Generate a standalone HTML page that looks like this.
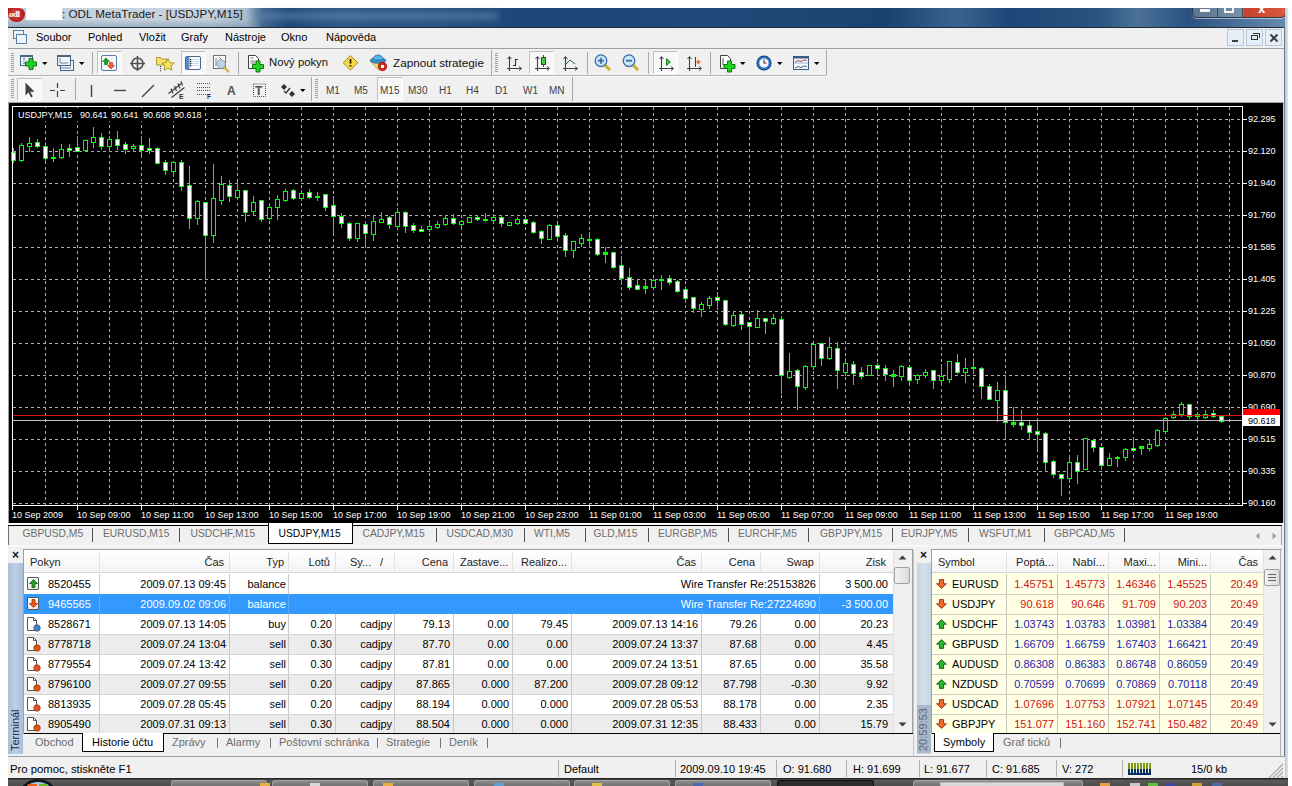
<!DOCTYPE html><html><head><meta charset="utf-8"><style>
*{margin:0;padding:0;box-sizing:border-box}
body{width:1292px;height:786px;overflow:hidden;background:#fff;font-family:"Liberation Sans", sans-serif;font-size:11px;color:#000;position:relative}
.a{position:absolute}
.t{position:absolute;white-space:nowrap;line-height:1}
</style></head><body>

<div class="a" style="left:8px;top:8px;width:1280px;height:20px;background:linear-gradient(90deg,#bccadb 0px,#c9d4df 100px,#c4d0dc 200px,#a9bccf 238px,#3d6590 255px,#1f4777 280px,#2f5886 330px,#2a5282 420px,#1d4575 520px,#204a7a 700px,#1c426f 880px,#3a6490 950px,#1f4676 1000px,#2a5380 1090px,#4c7299 1130px,#2a5280 1180px,#6a8cae 1280px)"></div>
<div class="a" style="left:8px;top:19px;width:250px;height:8px;background:linear-gradient(180deg,rgba(150,170,190,0) 0,rgba(120,145,170,0.55) 100%)"></div>
<div class="a" style="left:8px;top:27px;width:1277px;height:1px;background:#1e2b38"></div>
<div class="a" style="left:258px;top:12px;width:240px;height:8px;background:rgba(110,140,175,0.55);filter:blur(3px)"></div>
<div class="a" style="left:8px;top:8px;width:17px;height:14px;background:radial-gradient(circle at 45% 40%,#e84a4a,#b01c1c 70%,#8a1010);border-radius:0 6px 8px 8px"></div>
<div class="t" style="left:9px;top:10px;font-size:9px;color:#fff;font-family:'Liberation Serif',serif;font-weight:bold;letter-spacing:-0.5px">odl</div>
<div class="a" style="left:26px;top:8px;width:36px;height:12px;background:#fff"></div>
<div class="t" style="left:62px;top:8px;font-size:11.7px;color:#1b1b1b">: ODL MetaTrader - [USDJPY,M15]</div>
<div class="a" style="left:1192px;top:8px;width:94px;height:10px;border:1px solid #2a3a4e;border-top:none;border-radius:0 0 5px 5px;background:linear-gradient(90deg,#5a7590 0,#7890a8 50px,#c8402c 51px,#d85a40 93px);box-shadow:0 1px 0 rgba(255,255,255,0.5)"></div>
<div class="a" style="left:1217px;top:8px;width:1px;height:10px;background:#3a4a5a"></div>
<div class="a" style="left:1242px;top:8px;width:1px;height:10px;background:#3a4a5a"></div>
<div class="a" style="left:1200px;top:9px;width:10px;height:3px;background:#f4f4f4"></div>
<div class="a" style="left:1224px;top:8px;width:10px;height:5px;border:2px solid #f4f4f4;border-top:none"></div>
<div class="t" style="left:1258px;top:2px;font-size:13px;color:#fff;font-weight:bold">x</div>
<div class="a" style="left:1284px;top:27px;width:1px;height:752px;background:#6a7a8a"></div>
<div class="a" style="left:1285px;top:8px;width:3px;height:771px;background:linear-gradient(90deg,#b4c8dc,#dce6f0)"></div>
<div class="a" style="left:8px;top:28px;width:1276px;height:20px;background:#f0f0f0"></div>
<div class="a" style="left:8px;top:48px;width:1276px;height:1px;background:#a0a0a0"></div>
<div class="t" style="left:36px;top:32px;font-size:11px">Soubor</div>
<div class="t" style="left:88px;top:32px;font-size:11px">Pohled</div>
<div class="t" style="left:139px;top:32px;font-size:11px">Vložit</div>
<div class="t" style="left:181px;top:32px;font-size:11px">Grafy</div>
<div class="t" style="left:225px;top:32px;font-size:11px">Nástroje</div>
<div class="t" style="left:281px;top:32px;font-size:11px">Okno</div>
<div class="t" style="left:326px;top:32px;font-size:11px">Nápověda</div>
<div class="a" style="left:13px;top:30px;width:11px;height:9px;border:1px solid #5a7fa8;background:#eaf2fa"></div>
<div class="a" style="left:16px;top:34px;width:11px;height:10px;border:1px solid #5a7fa8;background:#eaf2fa"></div>
<div class="a" style="left:1227px;top:29px;width:17px;height:17px;border:1px solid #b8c8dc;background:#e6eef8"></div>
<div class="a" style="left:1246px;top:29px;width:17px;height:17px;border:1px solid #b8c8dc;background:#e6eef8"></div>
<div class="a" style="left:1265px;top:29px;width:17px;height:17px;border:1px solid #b8c8dc;background:#e6eef8"></div>
<div class="a" style="left:1232px;top:40px;width:6px;height:2px;background:#3a4248"></div>
<div class="a" style="left:1251px;top:35px;width:7px;height:5px;border:1px solid #333"></div>
<div class="a" style="left:1253px;top:33px;width:7px;height:5px;border:1px solid #333;border-left:none;border-bottom:none"></div>
<svg class="a" style="left:1269px;top:33px" width="10" height="10" viewBox="0 0 10 10"><path d="M1.5 1.5l7 7M8.5 1.5l-7 7" stroke="#3a4248" stroke-width="2"/></svg>
<div class="a" style="left:8px;top:49px;width:1276px;height:53px;background:#f0f0f0"></div>
<div class="a" style="left:8px;top:75px;width:818px;height:1px;background:#b4b4b4"></div>
<div class="a" style="left:8px;top:76px;width:818px;height:1px;background:#fafafa"></div>
<div class="a" style="left:11px;top:53px;width:3px;height:1px;background:#a0a0a0"></div>
<div class="a" style="left:11px;top:55px;width:3px;height:1px;background:#a0a0a0"></div>
<div class="a" style="left:11px;top:57px;width:3px;height:1px;background:#a0a0a0"></div>
<div class="a" style="left:11px;top:59px;width:3px;height:1px;background:#a0a0a0"></div>
<div class="a" style="left:11px;top:61px;width:3px;height:1px;background:#a0a0a0"></div>
<div class="a" style="left:11px;top:63px;width:3px;height:1px;background:#a0a0a0"></div>
<div class="a" style="left:11px;top:65px;width:3px;height:1px;background:#a0a0a0"></div>
<div class="a" style="left:11px;top:67px;width:3px;height:1px;background:#a0a0a0"></div>
<div class="a" style="left:11px;top:69px;width:3px;height:1px;background:#a0a0a0"></div>
<div class="a" style="left:11px;top:71px;width:3px;height:1px;background:#a0a0a0"></div>
<div class="a" style="left:491px;top:50px;width:1px;height:25px;background:#a8a8a8"></div>
<div class="a" style="left:495px;top:53px;width:3px;height:1px;background:#a0a0a0"></div>
<div class="a" style="left:495px;top:55px;width:3px;height:1px;background:#a0a0a0"></div>
<div class="a" style="left:495px;top:57px;width:3px;height:1px;background:#a0a0a0"></div>
<div class="a" style="left:495px;top:59px;width:3px;height:1px;background:#a0a0a0"></div>
<div class="a" style="left:495px;top:61px;width:3px;height:1px;background:#a0a0a0"></div>
<div class="a" style="left:495px;top:63px;width:3px;height:1px;background:#a0a0a0"></div>
<div class="a" style="left:495px;top:65px;width:3px;height:1px;background:#a0a0a0"></div>
<div class="a" style="left:495px;top:67px;width:3px;height:1px;background:#a0a0a0"></div>
<div class="a" style="left:495px;top:69px;width:3px;height:1px;background:#a0a0a0"></div>
<div class="a" style="left:495px;top:71px;width:3px;height:1px;background:#a0a0a0"></div>
<div class="a" style="left:826px;top:50px;width:1px;height:25px;background:#a8a8a8"></div>
<div class="a" style="left:92px;top:52px;width:1px;height:22px;background:#a8a8a8"></div>
<div class="a" style="left:238px;top:52px;width:1px;height:22px;background:#a8a8a8"></div>
<div class="a" style="left:97px;top:51px;width:25px;height:23px;border:1px solid #c0c0c0;border-right-color:#fff;border-bottom-color:#fff;background:#f8f8f8"></div>
<div class="a" style="left:181px;top:51px;width:25px;height:23px;border:1px solid #c0c0c0;border-right-color:#fff;border-bottom-color:#fff;background:#f8f8f8"></div>
<div class="a" style="left:587px;top:52px;width:1px;height:22px;background:#a8a8a8"></div>
<div class="a" style="left:648px;top:52px;width:1px;height:22px;background:#a8a8a8"></div>
<div class="a" style="left:710px;top:52px;width:1px;height:22px;background:#a8a8a8"></div>
<div class="a" style="left:529px;top:51px;width:25px;height:23px;border:1px solid #c0c0c0;border-right-color:#fff;border-bottom-color:#fff;background:#f8f8f8"></div>
<div class="a" style="left:653px;top:51px;width:25px;height:23px;border:1px solid #c0c0c0;border-right-color:#fff;border-bottom-color:#fff;background:#f8f8f8"></div>
<div class="t" style="left:269px;top:57px;font-size:11.3px;color:#111">Nový pokyn</div>
<div class="t" style="left:393px;top:57px;font-size:11.7px;color:#111">Zapnout strategie</div>
<div class="a" style="left:11px;top:79px;width:3px;height:1px;background:#a0a0a0"></div>
<div class="a" style="left:11px;top:81px;width:3px;height:1px;background:#a0a0a0"></div>
<div class="a" style="left:11px;top:83px;width:3px;height:1px;background:#a0a0a0"></div>
<div class="a" style="left:11px;top:85px;width:3px;height:1px;background:#a0a0a0"></div>
<div class="a" style="left:11px;top:87px;width:3px;height:1px;background:#a0a0a0"></div>
<div class="a" style="left:11px;top:89px;width:3px;height:1px;background:#a0a0a0"></div>
<div class="a" style="left:11px;top:91px;width:3px;height:1px;background:#a0a0a0"></div>
<div class="a" style="left:11px;top:93px;width:3px;height:1px;background:#a0a0a0"></div>
<div class="a" style="left:11px;top:95px;width:3px;height:1px;background:#a0a0a0"></div>
<div class="a" style="left:11px;top:97px;width:3px;height:1px;background:#a0a0a0"></div>
<div class="a" style="left:75px;top:78px;width:1px;height:22px;background:#a8a8a8"></div>
<div class="a" style="left:17px;top:78px;width:25px;height:23px;border:1px solid #c0c0c0;border-right-color:#fff;border-bottom-color:#fff;background:#f8f8f8"></div>
<div class="a" style="left:311px;top:77px;width:1px;height:24px;background:#a8a8a8"></div>
<div class="a" style="left:315px;top:79px;width:3px;height:1px;background:#a0a0a0"></div>
<div class="a" style="left:315px;top:81px;width:3px;height:1px;background:#a0a0a0"></div>
<div class="a" style="left:315px;top:83px;width:3px;height:1px;background:#a0a0a0"></div>
<div class="a" style="left:315px;top:85px;width:3px;height:1px;background:#a0a0a0"></div>
<div class="a" style="left:315px;top:87px;width:3px;height:1px;background:#a0a0a0"></div>
<div class="a" style="left:315px;top:89px;width:3px;height:1px;background:#a0a0a0"></div>
<div class="a" style="left:315px;top:91px;width:3px;height:1px;background:#a0a0a0"></div>
<div class="a" style="left:315px;top:93px;width:3px;height:1px;background:#a0a0a0"></div>
<div class="a" style="left:315px;top:95px;width:3px;height:1px;background:#a0a0a0"></div>
<div class="a" style="left:315px;top:97px;width:3px;height:1px;background:#a0a0a0"></div>
<div class="a" style="left:572px;top:77px;width:1px;height:24px;background:#a8a8a8"></div>
<div class="a" style="left:377px;top:77px;width:26px;height:24px;border:1px solid #c0c0c0;border-right-color:#fff;border-bottom-color:#fff;background:#f8f8f8"></div>
<div class="t" style="left:326px;top:86px;font-size:10px;color:#404040">M1</div>
<div class="t" style="left:354px;top:86px;font-size:10px;color:#404040">M5</div>
<div class="t" style="left:380px;top:86px;font-size:10px;color:#404040">M15</div>
<div class="t" style="left:408px;top:86px;font-size:10px;color:#404040">M30</div>
<div class="t" style="left:439px;top:86px;font-size:10px;color:#404040">H1</div>
<div class="t" style="left:466px;top:86px;font-size:10px;color:#404040">H4</div>
<div class="t" style="left:495px;top:86px;font-size:10px;color:#404040">D1</div>
<div class="t" style="left:523px;top:86px;font-size:10px;color:#404040">W1</div>
<div class="t" style="left:549px;top:86px;font-size:10px;color:#404040">MN</div>
<svg class="a" style="left:0px;top:0px" width="1292" height="105" viewBox="0 0 1292 105">
<rect x="20.5" y="55.5" width="12" height="10" fill="#eaf4fc" stroke="#4a6584"/>
<rect x="20.5" y="55.5" width="12" height="1.5" fill="#4a6584"/>
<path d="M24 58v6M23 59l1-1 1 1M23 63l1 1 1-1" stroke="#7a8aa0" fill="none" stroke-width="0.8"/>
<path d="M29 58.5 h4 v3.5 h3.5 v4 h-3.5 v3.5 h-4 v-3.5 h-3.5 v-4 h3.5 z" fill="#22d422" stroke="#0a6a0a" stroke-width="0.9"/>
<path d="M42 62 h5.5 l-2.75 3 z" fill="#000"/>
<rect x="60.5" y="60.5" width="13" height="10" fill="#eaf4fc" stroke="#4a6584"/>
<rect x="57.5" y="55.5" width="13" height="10" fill="#eaf4fc" stroke="#4a6584"/>
<rect x="57.5" y="55.5" width="13" height="1.5" fill="#4a6584"/>
<path d="M60 58v5h8M61 68h10" stroke="#6a7a90" fill="none" stroke-width="0.9"/>
<path d="M79 62 h5.5 l-2.75 3 z" fill="#000"/>
<rect x="101.5" y="55.5" width="15" height="15" rx="1.5" fill="#f2f8fe" stroke="#5a7aa8"/>
<path d="M106 58 l3.5 3.5 h-2 v3 h-3 v-3 h-2 z" fill="#1ea01e" stroke="#0a700a" stroke-width="0.6"/>
<path d="M111 69 l3.5 -3.5 h-2 v-3 h-3 v3 h-2 z" fill="#f06030" stroke="#b03010" stroke-width="0.6"/>
<circle cx="137.5" cy="63.5" r="5.5" fill="none" stroke="#505050" stroke-width="1.6"/>
<path d="M137.5 56v15M130 63.5h15" stroke="#505050" stroke-width="1.6"/>
<path d="M156.5 57.5h4l1 1.5h5v6h-10z" fill="#f8e070" stroke="#b09838"/>
<path d="M168 58.5l1.9 4 4.3 .5-3.2 2.9.9 4.3-3.9-2.2-3.9 2.2.9-4.3-3.2-2.9 4.3-.5z" fill="#f6e25a" stroke="#a89030" stroke-width="0.9"/>
<path d="M160.5 66v6" stroke="#333" stroke-dasharray="1,1.2"/>
<rect x="185.5" y="56.5" width="15" height="13" rx="1.5" fill="#fafcff" stroke="#4a6a8a"/>
<rect x="186" y="57" width="3.5" height="12" fill="#5a8ac8"/>
<rect x="190" y="59" width="1.3" height="1.3" fill="#222"/><rect x="192" y="59.3" width="7" height="0.7" fill="#b8c8e0"/>
<rect x="190" y="61" width="1.3" height="1.3" fill="#222"/><rect x="192" y="61.3" width="7" height="0.7" fill="#b8c8e0"/>
<rect x="190" y="63" width="1.3" height="1.3" fill="#222"/><rect x="192" y="63.3" width="7" height="0.7" fill="#b8c8e0"/>
<rect x="190" y="65" width="1.3" height="1.3" fill="#222"/><rect x="192" y="65.3" width="7" height="0.7" fill="#b8c8e0"/>
<rect x="213.5" y="55.5" width="12" height="13" fill="#fff" stroke="#707070"/>
<path d="M216 58v8M219 57l3 3" stroke="#606870" stroke-width="0.9" fill="none"/>
<circle cx="221" cy="64" r="4.3" fill="#b8d4e8" stroke="#8aa8c0" stroke-width="0.9"/>
<path d="M224 67l5 5" stroke="#c8b040" stroke-width="2.2"/>
<path d="M248.5 55.5h7l3 3v10h-10z" fill="#fff" stroke="#404040"/>
<path d="M250.5 58h3M250.5 61h5M250.5 63h5" stroke="#777" stroke-width="1"/>
<path d="M256 61.0 h4 v3.5 h3.5 v4 h-3.5 v3.5 h-4 v-3.5 h-3.5 v-4 h3.5 z" fill="#22d422" stroke="#0a6a0a" stroke-width="0.9"/>
<path d="M350.5 55.5l7.3 7.3-7.3 7.3-7.3-7.3z" fill="#f8d848" stroke="#a88a20" stroke-linejoin="round"/>
<path d="M350.5 59v4.5M350.5 65v1.5" stroke="#302000" stroke-width="1.8"/>
<path d="M370.5 61.5h14l-6 8.5z" fill="#f6e070" stroke="#b89838" stroke-width="0.8"/>
<ellipse cx="378" cy="60.5" rx="7.8" ry="2.8" fill="#3a8ccc" stroke="#2a68a0" stroke-width="0.8"/>
<path d="M372.5 60 q1-5 5.5-5 q4.5 0 5.5 5z" fill="#5ab4e8" stroke="#2a68a0" stroke-width="0.8"/>
<circle cx="382.5" cy="66.5" r="4.2" fill="#d42a1a" stroke="#901010" stroke-width="0.8"/>
<rect x="381" y="65" width="3" height="3" fill="#fff"/>
<path d="M509.5 57v14M507 68.5h14" stroke="#404040" stroke-width="1.1" fill="none"/>
<path d="M507.5 59l2-2.5 2 2.5M519 66.5l2.5 2-2.5 2" stroke="#404040" stroke-width="1" fill="none"/>
<path d="M515.5 59v7M515.5 59.5h2.5M513 65.5h2.5" stroke="#204020" stroke-width="1.1" fill="none"/>
<path d="M537.5 57v14M535 68.5h14" stroke="#404040" stroke-width="1.1" fill="none"/>
<path d="M535.5 59l2-2.5 2 2.5M547 66.5l2.5 2-2.5 2" stroke="#404040" stroke-width="1" fill="none"/>
<path d="M543.5 55v12" stroke="#106010" stroke-width="1"/>
<rect x="541.5" y="57.5" width="4" height="7" fill="#40d040" stroke="#106010"/>
<path d="M565.5 57v14M563 68.5h14" stroke="#404040" stroke-width="1.1" fill="none"/>
<path d="M563.5 59l2-2.5 2 2.5M575 66.5l2.5 2-2.5 2" stroke="#404040" stroke-width="1" fill="none"/>
<path d="M566 64l4-4 5 4" stroke="#306030" stroke-width="1" fill="none"/>
<path d="M605 65l5 5" stroke="#c8b030" stroke-width="3"/>
<circle cx="601" cy="60.7" r="5.8" fill="#cae8f8" stroke="#3a6ab0" stroke-width="1.3"/>
<path d="M598 60.7h6" stroke="#3a6ab0" stroke-width="1.8"/>
<path d="M601 57.7v6" stroke="#3a6ab0" stroke-width="1.8"/>
<path d="M633 65l5 5" stroke="#c8b030" stroke-width="3"/>
<circle cx="629" cy="60.7" r="5.8" fill="#cae8f8" stroke="#3a6ab0" stroke-width="1.3"/>
<path d="M626 60.7h6" stroke="#3a6ab0" stroke-width="1.8"/>
<path d="M661.5 57v14M659 68.5h14" stroke="#404040" stroke-width="1.1" fill="none"/>
<path d="M659.5 59l2-2.5 2 2.5M671 66.5l2.5 2-2.5 2" stroke="#404040" stroke-width="1" fill="none"/>
<path d="M666.5 58.5l4 3.5-4 3.5z" fill="#40c040" stroke="#108010" stroke-width="0.9"/>
<path d="M689.5 57v14M687 68.5h14" stroke="#404040" stroke-width="1.1" fill="none"/>
<path d="M687.5 59l2-2.5 2 2.5M699 66.5l2.5 2-2.5 2" stroke="#404040" stroke-width="1" fill="none"/>
<path d="M695.5 57v10" stroke="#404040" stroke-width="1.1"/>
<path d="M701 62h-4M699 60l-2 2 2 2" stroke="#d06020" stroke-width="1.1" fill="none"/>
<path d="M720.5 55.5h7l3 3v10h-10z" fill="#fff" stroke="#404040"/>
<path d="M723 58v7h3" stroke="#555" fill="none"/>
<path d="M727.5 61.0 h4 v3.5 h3.5 v4 h-3.5 v3.5 h-4 v-3.5 h-3.5 v-4 h3.5 z" fill="#22d422" stroke="#0a6a0a" stroke-width="0.9"/>
<path d="M740 62 h5.5 l-2.75 3 z" fill="#000"/>
<circle cx="764" cy="63" r="7.6" fill="#12468a"/>
<circle cx="764" cy="63" r="6.3" fill="#3a7ac8"/>
<circle cx="764" cy="63" r="4.6" fill="#f4f8fc"/>
<path d="M764 59.5v3.5h2.5" stroke="#6a2010" stroke-width="1.1" fill="none"/>
<path d="M777 62 h5.5 l-2.75 3 z" fill="#000"/>
<rect x="793.5" y="56.5" width="15" height="13" fill="#f4faff" stroke="#3a5a88"/>
<rect x="793.5" y="56.5" width="15" height="2" fill="#3a5a88"/>
<path d="M794 63h14" stroke="#8aa0c0" stroke-width="0.8"/>
<path d="M795 62l3-1.5 3 1 3-1.5 3 0.5" stroke="#b03020" stroke-width="0.9" fill="none"/>
<path d="M795 68l3-1.5 3 1 3-1.5 3 0.5" stroke="#405060" stroke-width="0.9" fill="none"/>
<path d="M814 62 h5.5 l-2.75 3 z" fill="#000"/>
<path d="M25.5 82.5v13l3-3 2.5 5 1.8-1-2.5-4.8h4.2z" fill="#404040"/>
<path d="M57.5 83v5M57.5 91v6M50 90.5h5M60 90.5h5" stroke="#404040" stroke-width="1.2"/>
<path d="M91.5 85v12" stroke="#404040" stroke-width="1.4"/>
<path d="M114 90.5h12" stroke="#404040" stroke-width="1.4"/>
<path d="M142 97l12-12" stroke="#404040" stroke-width="1.3"/>
<path d="M168.5 93.5l13-10M171.5 97.5l13-10" stroke="#404040" stroke-width="1.3" fill="none"/>
<path d="M171 88.5l2 5M174.5 86l2 5M178 83.5l2 5M181 81.5l1.5 4" stroke="#404040" stroke-width="1.2" fill="none"/>
<text x="179" y="98.5" font-size="7" font-weight="bold" fill="#303030" font-family="Liberation Sans, sans-serif">E</text>
<path d="M197 83.5h13" stroke="#505050" stroke-dasharray="1,1" stroke-width="1"/>
<path d="M197 87.5h13" stroke="#505050" stroke-dasharray="1,1" stroke-width="1"/>
<path d="M197 90.5h13" stroke="#505050" stroke-dasharray="1,1" stroke-width="1"/>
<path d="M197 94.5h13" stroke="#505050" stroke-dasharray="1,1" stroke-width="1"/>
<text x="207" y="99" font-size="6.5" font-weight="bold" fill="#303030" font-family="Liberation Sans, sans-serif">F</text>
<text x="227" y="95" font-size="12" font-weight="bold" fill="#505050" font-family="Liberation Sans, sans-serif">A</text>
<rect x="253.5" y="84" width="12" height="12.5" fill="none" stroke="#505050" stroke-dasharray="1,1"/>
<text x="255" y="95" font-size="12" font-weight="bold" fill="#505050" font-family="Liberation Sans, sans-serif">T</text>
<path d="M281 87l3-3 3 3-3 3z" fill="#303030"/><path d="M289 94l3-3 3 3-3 3z" fill="#303030"/>
<path d="M284 91l2 2 4-5" stroke="#303030" stroke-width="1.3" fill="none"/>
<path d="M300 89 h5.5 l-2.75 3 z" fill="#000"/>
</svg>
<div class="a" style="left:8px;top:102px;width:1276px;height:421px;background:#000;border-left:1px solid #a0a0a0;border-top:1px solid #a0a0a0;border-right:1px solid #d0d0d0"></div>
<svg class="a" style="left:10px;top:104px" width="1272" height="419" viewBox="10 104 1272 419" shape-rendering="crispEdges" font-family="Liberation Sans, sans-serif">
<line x1="45.5" y1="107" x2="45.5" y2="505" stroke="#acacac" stroke-dasharray="3,3"/>
<line x1="77.5" y1="107" x2="77.5" y2="505" stroke="#acacac" stroke-dasharray="3,3"/>
<line x1="109.5" y1="107" x2="109.5" y2="505" stroke="#acacac" stroke-dasharray="3,3"/>
<line x1="141.5" y1="107" x2="141.5" y2="505" stroke="#acacac" stroke-dasharray="3,3"/>
<line x1="173.5" y1="107" x2="173.5" y2="505" stroke="#acacac" stroke-dasharray="3,3"/>
<line x1="205.5" y1="107" x2="205.5" y2="505" stroke="#acacac" stroke-dasharray="3,3"/>
<line x1="237.5" y1="107" x2="237.5" y2="505" stroke="#acacac" stroke-dasharray="3,3"/>
<line x1="269.5" y1="107" x2="269.5" y2="505" stroke="#acacac" stroke-dasharray="3,3"/>
<line x1="301.5" y1="107" x2="301.5" y2="505" stroke="#acacac" stroke-dasharray="3,3"/>
<line x1="333.5" y1="107" x2="333.5" y2="505" stroke="#acacac" stroke-dasharray="3,3"/>
<line x1="365.5" y1="107" x2="365.5" y2="505" stroke="#acacac" stroke-dasharray="3,3"/>
<line x1="397.5" y1="107" x2="397.5" y2="505" stroke="#acacac" stroke-dasharray="3,3"/>
<line x1="429.5" y1="107" x2="429.5" y2="505" stroke="#acacac" stroke-dasharray="3,3"/>
<line x1="461.5" y1="107" x2="461.5" y2="505" stroke="#acacac" stroke-dasharray="3,3"/>
<line x1="493.5" y1="107" x2="493.5" y2="505" stroke="#acacac" stroke-dasharray="3,3"/>
<line x1="525.5" y1="107" x2="525.5" y2="505" stroke="#acacac" stroke-dasharray="3,3"/>
<line x1="557.5" y1="107" x2="557.5" y2="505" stroke="#acacac" stroke-dasharray="3,3"/>
<line x1="589.5" y1="107" x2="589.5" y2="505" stroke="#acacac" stroke-dasharray="3,3"/>
<line x1="621.5" y1="107" x2="621.5" y2="505" stroke="#acacac" stroke-dasharray="3,3"/>
<line x1="653.5" y1="107" x2="653.5" y2="505" stroke="#acacac" stroke-dasharray="3,3"/>
<line x1="685.5" y1="107" x2="685.5" y2="505" stroke="#acacac" stroke-dasharray="3,3"/>
<line x1="717.5" y1="107" x2="717.5" y2="505" stroke="#acacac" stroke-dasharray="3,3"/>
<line x1="749.5" y1="107" x2="749.5" y2="505" stroke="#acacac" stroke-dasharray="3,3"/>
<line x1="781.5" y1="107" x2="781.5" y2="505" stroke="#acacac" stroke-dasharray="3,3"/>
<line x1="813.5" y1="107" x2="813.5" y2="505" stroke="#acacac" stroke-dasharray="3,3"/>
<line x1="845.5" y1="107" x2="845.5" y2="505" stroke="#acacac" stroke-dasharray="3,3"/>
<line x1="877.5" y1="107" x2="877.5" y2="505" stroke="#acacac" stroke-dasharray="3,3"/>
<line x1="909.5" y1="107" x2="909.5" y2="505" stroke="#acacac" stroke-dasharray="3,3"/>
<line x1="941.5" y1="107" x2="941.5" y2="505" stroke="#acacac" stroke-dasharray="3,3"/>
<line x1="973.5" y1="107" x2="973.5" y2="505" stroke="#acacac" stroke-dasharray="3,3"/>
<line x1="1005.5" y1="107" x2="1005.5" y2="505" stroke="#acacac" stroke-dasharray="3,3"/>
<line x1="1037.5" y1="107" x2="1037.5" y2="505" stroke="#acacac" stroke-dasharray="3,3"/>
<line x1="1069.5" y1="107" x2="1069.5" y2="505" stroke="#acacac" stroke-dasharray="3,3"/>
<line x1="1101.5" y1="107" x2="1101.5" y2="505" stroke="#acacac" stroke-dasharray="3,3"/>
<line x1="1133.5" y1="107" x2="1133.5" y2="505" stroke="#acacac" stroke-dasharray="3,3"/>
<line x1="1165.5" y1="107" x2="1165.5" y2="505" stroke="#acacac" stroke-dasharray="3,3"/>
<line x1="1197.5" y1="107" x2="1197.5" y2="505" stroke="#acacac" stroke-dasharray="3,3"/>
<line x1="1229.5" y1="107" x2="1229.5" y2="505" stroke="#acacac" stroke-dasharray="3,3"/>
<line x1="13" y1="119.5" x2="1242" y2="119.5" stroke="#acacac" stroke-dasharray="3,3"/>
<line x1="13" y1="151.5" x2="1242" y2="151.5" stroke="#acacac" stroke-dasharray="3,3"/>
<line x1="13" y1="183.5" x2="1242" y2="183.5" stroke="#acacac" stroke-dasharray="3,3"/>
<line x1="13" y1="215.5" x2="1242" y2="215.5" stroke="#acacac" stroke-dasharray="3,3"/>
<line x1="13" y1="247.5" x2="1242" y2="247.5" stroke="#acacac" stroke-dasharray="3,3"/>
<line x1="13" y1="279.5" x2="1242" y2="279.5" stroke="#acacac" stroke-dasharray="3,3"/>
<line x1="13" y1="311.5" x2="1242" y2="311.5" stroke="#acacac" stroke-dasharray="3,3"/>
<line x1="13" y1="343.5" x2="1242" y2="343.5" stroke="#acacac" stroke-dasharray="3,3"/>
<line x1="13" y1="375.5" x2="1242" y2="375.5" stroke="#acacac" stroke-dasharray="3,3"/>
<line x1="13" y1="407.5" x2="1242" y2="407.5" stroke="#acacac" stroke-dasharray="3,3"/>
<line x1="13" y1="439.5" x2="1242" y2="439.5" stroke="#acacac" stroke-dasharray="3,3"/>
<line x1="13" y1="471.5" x2="1242" y2="471.5" stroke="#acacac" stroke-dasharray="3,3"/>
<line x1="13" y1="503.5" x2="1242" y2="503.5" stroke="#acacac" stroke-dasharray="3,3"/>
<rect x="13" y="148" width="1" height="15" fill="#00ff00"/>
<rect x="11" y="152" width="5" height="9" fill="#00ff00"/>
<rect x="12" y="153" width="3" height="7" fill="#ffffff"/>
<rect x="21" y="143" width="1" height="19" fill="#00ff00"/>
<rect x="19" y="145" width="5" height="16" fill="#00ff00"/>
<rect x="20" y="146" width="3" height="14" fill="#000000"/>
<rect x="29" y="137" width="1" height="15" fill="#00ff00"/>
<rect x="27" y="143" width="5" height="4" fill="#00ff00"/>
<rect x="28" y="144" width="3" height="2" fill="#000000"/>
<rect x="37" y="139" width="1" height="9" fill="#00ff00"/>
<rect x="35" y="142" width="5" height="5" fill="#00ff00"/>
<rect x="36" y="143" width="3" height="3" fill="#ffffff"/>
<rect x="45" y="142" width="1" height="22" fill="#00ff00"/>
<rect x="43" y="146" width="5" height="13" fill="#00ff00"/>
<rect x="44" y="147" width="3" height="11" fill="#ffffff"/>
<rect x="53" y="148" width="1" height="14" fill="#00ff00"/>
<rect x="51" y="157" width="5" height="2" fill="#00ff00"/>
<rect x="61" y="144" width="1" height="15" fill="#00ff00"/>
<rect x="59" y="149" width="5" height="9" fill="#00ff00"/>
<rect x="60" y="150" width="3" height="7" fill="#000000"/>
<rect x="69" y="144" width="1" height="13" fill="#00ff00"/>
<rect x="67" y="148" width="5" height="3" fill="#00ff00"/>
<rect x="68" y="149" width="3" height="1" fill="#ffffff"/>
<rect x="77" y="136" width="1" height="16" fill="#00ff00"/>
<rect x="75" y="147" width="5" height="5" fill="#00ff00"/>
<rect x="76" y="148" width="3" height="3" fill="#ffffff"/>
<rect x="85" y="140" width="1" height="12" fill="#00ff00"/>
<rect x="83" y="140" width="5" height="11" fill="#00ff00"/>
<rect x="84" y="141" width="3" height="9" fill="#000000"/>
<rect x="93" y="127" width="1" height="21" fill="#00ff00"/>
<rect x="91" y="137" width="5" height="6" fill="#00ff00"/>
<rect x="92" y="138" width="3" height="4" fill="#000000"/>
<rect x="101" y="133" width="1" height="17" fill="#00ff00"/>
<rect x="99" y="137" width="5" height="10" fill="#00ff00"/>
<rect x="100" y="138" width="3" height="8" fill="#ffffff"/>
<rect x="109" y="136" width="1" height="16" fill="#00ff00"/>
<rect x="107" y="139" width="5" height="8" fill="#00ff00"/>
<rect x="108" y="140" width="3" height="6" fill="#000000"/>
<rect x="117" y="131" width="1" height="19" fill="#00ff00"/>
<rect x="115" y="139" width="5" height="7" fill="#00ff00"/>
<rect x="116" y="140" width="3" height="5" fill="#ffffff"/>
<rect x="125" y="142" width="1" height="12" fill="#00ff00"/>
<rect x="123" y="144" width="5" height="6" fill="#00ff00"/>
<rect x="124" y="145" width="3" height="4" fill="#ffffff"/>
<rect x="133" y="144" width="1" height="7" fill="#00ff00"/>
<rect x="131" y="146" width="5" height="3" fill="#00ff00"/>
<rect x="132" y="147" width="3" height="1" fill="#000000"/>
<rect x="141" y="136" width="1" height="22" fill="#00ff00"/>
<rect x="139" y="145" width="5" height="6" fill="#00ff00"/>
<rect x="140" y="146" width="3" height="4" fill="#ffffff"/>
<rect x="149" y="138" width="1" height="16" fill="#00ff00"/>
<rect x="147" y="148" width="5" height="3" fill="#00ff00"/>
<rect x="148" y="149" width="3" height="1" fill="#ffffff"/>
<rect x="157" y="147" width="1" height="17" fill="#00ff00"/>
<rect x="155" y="148" width="5" height="16" fill="#00ff00"/>
<rect x="156" y="149" width="3" height="14" fill="#ffffff"/>
<rect x="165" y="160" width="1" height="15" fill="#00ff00"/>
<rect x="163" y="162" width="5" height="9" fill="#00ff00"/>
<rect x="164" y="163" width="3" height="7" fill="#ffffff"/>
<rect x="173" y="161" width="1" height="16" fill="#00ff00"/>
<rect x="171" y="162" width="5" height="10" fill="#00ff00"/>
<rect x="172" y="163" width="3" height="8" fill="#000000"/>
<rect x="181" y="160" width="1" height="31" fill="#00ff00"/>
<rect x="179" y="162" width="5" height="25" fill="#00ff00"/>
<rect x="180" y="163" width="3" height="23" fill="#ffffff"/>
<rect x="189" y="166" width="1" height="63" fill="#00ff00"/>
<rect x="187" y="185" width="5" height="34" fill="#00ff00"/>
<rect x="188" y="186" width="3" height="32" fill="#ffffff"/>
<rect x="197" y="200" width="1" height="25" fill="#00ff00"/>
<rect x="195" y="201" width="5" height="18" fill="#00ff00"/>
<rect x="196" y="202" width="3" height="16" fill="#000000"/>
<rect x="205" y="202" width="1" height="77" fill="#00ff00"/>
<rect x="203" y="202" width="5" height="34" fill="#00ff00"/>
<rect x="204" y="203" width="3" height="32" fill="#ffffff"/>
<rect x="213" y="164" width="1" height="79" fill="#00ff00"/>
<rect x="211" y="198" width="5" height="38" fill="#00ff00"/>
<rect x="212" y="199" width="3" height="36" fill="#000000"/>
<rect x="221" y="176" width="1" height="29" fill="#00ff00"/>
<rect x="219" y="184" width="5" height="17" fill="#00ff00"/>
<rect x="220" y="185" width="3" height="15" fill="#000000"/>
<rect x="229" y="180" width="1" height="22" fill="#00ff00"/>
<rect x="227" y="185" width="5" height="12" fill="#00ff00"/>
<rect x="228" y="186" width="3" height="10" fill="#ffffff"/>
<rect x="237" y="182" width="1" height="18" fill="#00ff00"/>
<rect x="235" y="190" width="5" height="8" fill="#00ff00"/>
<rect x="236" y="191" width="3" height="6" fill="#000000"/>
<rect x="245" y="190" width="1" height="32" fill="#00ff00"/>
<rect x="243" y="190" width="5" height="23" fill="#00ff00"/>
<rect x="244" y="191" width="3" height="21" fill="#ffffff"/>
<rect x="253" y="196" width="1" height="20" fill="#00ff00"/>
<rect x="251" y="202" width="5" height="10" fill="#00ff00"/>
<rect x="252" y="203" width="3" height="8" fill="#000000"/>
<rect x="261" y="200" width="1" height="22" fill="#00ff00"/>
<rect x="259" y="200" width="5" height="20" fill="#00ff00"/>
<rect x="260" y="201" width="3" height="18" fill="#ffffff"/>
<rect x="269" y="203" width="1" height="17" fill="#00ff00"/>
<rect x="267" y="207" width="5" height="12" fill="#00ff00"/>
<rect x="268" y="208" width="3" height="10" fill="#000000"/>
<rect x="277" y="195" width="1" height="25" fill="#00ff00"/>
<rect x="275" y="199" width="5" height="9" fill="#00ff00"/>
<rect x="276" y="200" width="3" height="7" fill="#000000"/>
<rect x="285" y="189" width="1" height="13" fill="#00ff00"/>
<rect x="283" y="191" width="5" height="10" fill="#00ff00"/>
<rect x="284" y="192" width="3" height="8" fill="#000000"/>
<rect x="293" y="189" width="1" height="11" fill="#00ff00"/>
<rect x="291" y="190" width="5" height="9" fill="#00ff00"/>
<rect x="292" y="191" width="3" height="7" fill="#ffffff"/>
<rect x="301" y="190" width="1" height="11" fill="#00ff00"/>
<rect x="299" y="193" width="5" height="6" fill="#00ff00"/>
<rect x="300" y="194" width="3" height="4" fill="#000000"/>
<rect x="309" y="189" width="1" height="10" fill="#00ff00"/>
<rect x="307" y="192" width="5" height="6" fill="#00ff00"/>
<rect x="308" y="193" width="3" height="4" fill="#ffffff"/>
<rect x="317" y="192" width="1" height="9" fill="#00ff00"/>
<rect x="315" y="196" width="5" height="2" fill="#00ff00"/>
<rect x="325" y="194" width="1" height="17" fill="#00ff00"/>
<rect x="323" y="194" width="5" height="14" fill="#00ff00"/>
<rect x="324" y="195" width="3" height="12" fill="#ffffff"/>
<rect x="333" y="196" width="1" height="40" fill="#00ff00"/>
<rect x="331" y="205" width="5" height="12" fill="#00ff00"/>
<rect x="332" y="206" width="3" height="10" fill="#ffffff"/>
<rect x="341" y="213" width="1" height="15" fill="#00ff00"/>
<rect x="339" y="216" width="5" height="8" fill="#00ff00"/>
<rect x="340" y="217" width="3" height="6" fill="#ffffff"/>
<rect x="349" y="222" width="1" height="19" fill="#00ff00"/>
<rect x="347" y="223" width="5" height="16" fill="#00ff00"/>
<rect x="348" y="224" width="3" height="14" fill="#ffffff"/>
<rect x="357" y="223" width="1" height="19" fill="#00ff00"/>
<rect x="355" y="223" width="5" height="16" fill="#00ff00"/>
<rect x="356" y="224" width="3" height="14" fill="#000000"/>
<rect x="365" y="221" width="1" height="27" fill="#00ff00"/>
<rect x="363" y="224" width="5" height="10" fill="#00ff00"/>
<rect x="364" y="225" width="3" height="8" fill="#ffffff"/>
<rect x="373" y="216" width="1" height="25" fill="#00ff00"/>
<rect x="371" y="221" width="5" height="14" fill="#00ff00"/>
<rect x="372" y="222" width="3" height="12" fill="#000000"/>
<rect x="381" y="212" width="1" height="11" fill="#00ff00"/>
<rect x="379" y="219" width="5" height="4" fill="#00ff00"/>
<rect x="380" y="220" width="3" height="2" fill="#000000"/>
<rect x="389" y="216" width="1" height="13" fill="#00ff00"/>
<rect x="387" y="217" width="5" height="8" fill="#00ff00"/>
<rect x="388" y="218" width="3" height="6" fill="#ffffff"/>
<rect x="397" y="208" width="1" height="21" fill="#00ff00"/>
<rect x="395" y="212" width="5" height="15" fill="#00ff00"/>
<rect x="396" y="213" width="3" height="13" fill="#000000"/>
<rect x="405" y="211" width="1" height="22" fill="#00ff00"/>
<rect x="403" y="212" width="5" height="15" fill="#00ff00"/>
<rect x="404" y="213" width="3" height="13" fill="#ffffff"/>
<rect x="413" y="223" width="1" height="10" fill="#00ff00"/>
<rect x="411" y="225" width="5" height="6" fill="#00ff00"/>
<rect x="412" y="226" width="3" height="4" fill="#ffffff"/>
<rect x="421" y="226" width="1" height="6" fill="#00ff00"/>
<rect x="419" y="229" width="5" height="3" fill="#00ff00"/>
<rect x="420" y="230" width="3" height="1" fill="#ffffff"/>
<rect x="429" y="220" width="1" height="12" fill="#00ff00"/>
<rect x="427" y="226" width="5" height="4" fill="#00ff00"/>
<rect x="428" y="227" width="3" height="2" fill="#000000"/>
<rect x="437" y="221" width="1" height="8" fill="#00ff00"/>
<rect x="435" y="224" width="5" height="4" fill="#00ff00"/>
<rect x="436" y="225" width="3" height="2" fill="#000000"/>
<rect x="445" y="215" width="1" height="11" fill="#00ff00"/>
<rect x="443" y="218" width="5" height="7" fill="#00ff00"/>
<rect x="444" y="219" width="3" height="5" fill="#000000"/>
<rect x="453" y="214" width="1" height="11" fill="#00ff00"/>
<rect x="451" y="218" width="5" height="6" fill="#00ff00"/>
<rect x="452" y="219" width="3" height="4" fill="#ffffff"/>
<rect x="461" y="220" width="1" height="10" fill="#00ff00"/>
<rect x="459" y="221" width="5" height="4" fill="#00ff00"/>
<rect x="460" y="222" width="3" height="2" fill="#000000"/>
<rect x="469" y="217" width="1" height="6" fill="#00ff00"/>
<rect x="467" y="217" width="5" height="6" fill="#00ff00"/>
<rect x="468" y="218" width="3" height="4" fill="#000000"/>
<rect x="477" y="215" width="1" height="6" fill="#00ff00"/>
<rect x="475" y="217" width="5" height="3" fill="#00ff00"/>
<rect x="476" y="218" width="3" height="1" fill="#ffffff"/>
<rect x="485" y="213" width="1" height="9" fill="#00ff00"/>
<rect x="483" y="219" width="5" height="2" fill="#00ff00"/>
<rect x="493" y="214" width="1" height="9" fill="#00ff00"/>
<rect x="491" y="217" width="5" height="4" fill="#00ff00"/>
<rect x="492" y="218" width="3" height="2" fill="#000000"/>
<rect x="501" y="215" width="1" height="12" fill="#00ff00"/>
<rect x="499" y="217" width="5" height="7" fill="#00ff00"/>
<rect x="500" y="218" width="3" height="5" fill="#ffffff"/>
<rect x="509" y="222" width="1" height="4" fill="#00ff00"/>
<rect x="507" y="222" width="5" height="4" fill="#00ff00"/>
<rect x="508" y="223" width="3" height="2" fill="#000000"/>
<rect x="517" y="217" width="1" height="8" fill="#00ff00"/>
<rect x="515" y="219" width="5" height="5" fill="#00ff00"/>
<rect x="516" y="220" width="3" height="3" fill="#000000"/>
<rect x="525" y="218" width="1" height="7" fill="#00ff00"/>
<rect x="523" y="219" width="5" height="5" fill="#00ff00"/>
<rect x="524" y="220" width="3" height="3" fill="#ffffff"/>
<rect x="533" y="221" width="1" height="13" fill="#00ff00"/>
<rect x="531" y="222" width="5" height="11" fill="#00ff00"/>
<rect x="532" y="223" width="3" height="9" fill="#ffffff"/>
<rect x="541" y="230" width="1" height="14" fill="#00ff00"/>
<rect x="539" y="231" width="5" height="8" fill="#00ff00"/>
<rect x="540" y="232" width="3" height="6" fill="#ffffff"/>
<rect x="549" y="224" width="1" height="16" fill="#00ff00"/>
<rect x="547" y="225" width="5" height="15" fill="#00ff00"/>
<rect x="548" y="226" width="3" height="13" fill="#000000"/>
<rect x="557" y="224" width="1" height="18" fill="#00ff00"/>
<rect x="555" y="225" width="5" height="12" fill="#00ff00"/>
<rect x="556" y="226" width="3" height="10" fill="#ffffff"/>
<rect x="565" y="233" width="1" height="24" fill="#00ff00"/>
<rect x="563" y="235" width="5" height="16" fill="#00ff00"/>
<rect x="564" y="236" width="3" height="14" fill="#ffffff"/>
<rect x="573" y="241" width="1" height="17" fill="#00ff00"/>
<rect x="571" y="241" width="5" height="10" fill="#00ff00"/>
<rect x="572" y="242" width="3" height="8" fill="#000000"/>
<rect x="581" y="234" width="1" height="13" fill="#00ff00"/>
<rect x="579" y="238" width="5" height="6" fill="#00ff00"/>
<rect x="580" y="239" width="3" height="4" fill="#000000"/>
<rect x="589" y="232" width="1" height="15" fill="#00ff00"/>
<rect x="587" y="239" width="5" height="2" fill="#00ff00"/>
<rect x="597" y="238" width="1" height="18" fill="#00ff00"/>
<rect x="595" y="239" width="5" height="16" fill="#00ff00"/>
<rect x="596" y="240" width="3" height="14" fill="#ffffff"/>
<rect x="605" y="247" width="1" height="16" fill="#00ff00"/>
<rect x="603" y="252" width="5" height="3" fill="#00ff00"/>
<rect x="613" y="252" width="1" height="17" fill="#00ff00"/>
<rect x="611" y="252" width="5" height="16" fill="#00ff00"/>
<rect x="612" y="253" width="3" height="14" fill="#ffffff"/>
<rect x="621" y="256" width="1" height="29" fill="#00ff00"/>
<rect x="619" y="265" width="5" height="14" fill="#00ff00"/>
<rect x="620" y="266" width="3" height="12" fill="#ffffff"/>
<rect x="629" y="268" width="1" height="22" fill="#00ff00"/>
<rect x="627" y="277" width="5" height="11" fill="#00ff00"/>
<rect x="628" y="278" width="3" height="9" fill="#ffffff"/>
<rect x="637" y="280" width="1" height="10" fill="#00ff00"/>
<rect x="635" y="285" width="5" height="5" fill="#00ff00"/>
<rect x="636" y="286" width="3" height="3" fill="#ffffff"/>
<rect x="645" y="279" width="1" height="15" fill="#00ff00"/>
<rect x="643" y="286" width="5" height="3" fill="#00ff00"/>
<rect x="653" y="279" width="1" height="11" fill="#00ff00"/>
<rect x="651" y="280" width="5" height="8" fill="#00ff00"/>
<rect x="652" y="281" width="3" height="6" fill="#000000"/>
<rect x="661" y="275" width="1" height="15" fill="#00ff00"/>
<rect x="659" y="279" width="5" height="2" fill="#00ff00"/>
<rect x="669" y="275" width="1" height="10" fill="#00ff00"/>
<rect x="667" y="278" width="5" height="5" fill="#00ff00"/>
<rect x="668" y="279" width="3" height="3" fill="#ffffff"/>
<rect x="677" y="280" width="1" height="13" fill="#00ff00"/>
<rect x="675" y="281" width="5" height="11" fill="#00ff00"/>
<rect x="676" y="282" width="3" height="9" fill="#ffffff"/>
<rect x="685" y="286" width="1" height="17" fill="#00ff00"/>
<rect x="683" y="289" width="5" height="10" fill="#00ff00"/>
<rect x="684" y="290" width="3" height="8" fill="#ffffff"/>
<rect x="693" y="297" width="1" height="16" fill="#00ff00"/>
<rect x="691" y="297" width="5" height="12" fill="#00ff00"/>
<rect x="692" y="298" width="3" height="10" fill="#ffffff"/>
<rect x="701" y="302" width="1" height="15" fill="#00ff00"/>
<rect x="699" y="304" width="5" height="6" fill="#00ff00"/>
<rect x="700" y="305" width="3" height="4" fill="#000000"/>
<rect x="709" y="296" width="1" height="13" fill="#00ff00"/>
<rect x="707" y="298" width="5" height="8" fill="#00ff00"/>
<rect x="708" y="299" width="3" height="6" fill="#000000"/>
<rect x="717" y="292" width="1" height="18" fill="#00ff00"/>
<rect x="715" y="297" width="5" height="4" fill="#00ff00"/>
<rect x="716" y="298" width="3" height="2" fill="#ffffff"/>
<rect x="725" y="300" width="1" height="26" fill="#00ff00"/>
<rect x="723" y="300" width="5" height="25" fill="#00ff00"/>
<rect x="724" y="301" width="3" height="23" fill="#ffffff"/>
<rect x="733" y="312" width="1" height="15" fill="#00ff00"/>
<rect x="731" y="315" width="5" height="11" fill="#00ff00"/>
<rect x="732" y="316" width="3" height="9" fill="#000000"/>
<rect x="741" y="312" width="1" height="18" fill="#00ff00"/>
<rect x="739" y="314" width="5" height="11" fill="#00ff00"/>
<rect x="740" y="315" width="3" height="9" fill="#ffffff"/>
<rect x="749" y="322" width="1" height="34" fill="#00ff00"/>
<rect x="747" y="322" width="5" height="5" fill="#00ff00"/>
<rect x="748" y="323" width="3" height="3" fill="#ffffff"/>
<rect x="757" y="310" width="1" height="18" fill="#00ff00"/>
<rect x="755" y="318" width="5" height="10" fill="#00ff00"/>
<rect x="756" y="319" width="3" height="8" fill="#000000"/>
<rect x="765" y="318" width="1" height="16" fill="#00ff00"/>
<rect x="763" y="318" width="5" height="4" fill="#00ff00"/>
<rect x="764" y="319" width="3" height="2" fill="#ffffff"/>
<rect x="773" y="314" width="1" height="11" fill="#00ff00"/>
<rect x="771" y="318" width="5" height="6" fill="#00ff00"/>
<rect x="772" y="319" width="3" height="4" fill="#000000"/>
<rect x="781" y="316" width="1" height="78" fill="#00ff00"/>
<rect x="779" y="319" width="5" height="57" fill="#00ff00"/>
<rect x="780" y="320" width="3" height="55" fill="#ffffff"/>
<rect x="789" y="353" width="1" height="26" fill="#00ff00"/>
<rect x="787" y="371" width="5" height="7" fill="#00ff00"/>
<rect x="788" y="372" width="3" height="5" fill="#000000"/>
<rect x="797" y="369" width="1" height="41" fill="#00ff00"/>
<rect x="795" y="370" width="5" height="17" fill="#00ff00"/>
<rect x="796" y="371" width="3" height="15" fill="#ffffff"/>
<rect x="805" y="365" width="1" height="25" fill="#00ff00"/>
<rect x="803" y="366" width="5" height="22" fill="#00ff00"/>
<rect x="804" y="367" width="3" height="20" fill="#000000"/>
<rect x="813" y="343" width="1" height="27" fill="#00ff00"/>
<rect x="811" y="344" width="5" height="23" fill="#00ff00"/>
<rect x="812" y="345" width="3" height="21" fill="#000000"/>
<rect x="821" y="343" width="1" height="23" fill="#00ff00"/>
<rect x="819" y="343" width="5" height="16" fill="#00ff00"/>
<rect x="820" y="344" width="3" height="14" fill="#ffffff"/>
<rect x="829" y="337" width="1" height="23" fill="#00ff00"/>
<rect x="827" y="347" width="5" height="12" fill="#00ff00"/>
<rect x="828" y="348" width="3" height="10" fill="#000000"/>
<rect x="837" y="342" width="1" height="47" fill="#00ff00"/>
<rect x="835" y="348" width="5" height="23" fill="#00ff00"/>
<rect x="836" y="349" width="3" height="21" fill="#ffffff"/>
<rect x="845" y="358" width="1" height="18" fill="#00ff00"/>
<rect x="843" y="363" width="5" height="10" fill="#00ff00"/>
<rect x="844" y="364" width="3" height="8" fill="#000000"/>
<rect x="853" y="361" width="1" height="24" fill="#00ff00"/>
<rect x="851" y="364" width="5" height="10" fill="#00ff00"/>
<rect x="852" y="365" width="3" height="8" fill="#ffffff"/>
<rect x="861" y="367" width="1" height="12" fill="#00ff00"/>
<rect x="859" y="372" width="5" height="5" fill="#00ff00"/>
<rect x="860" y="373" width="3" height="3" fill="#ffffff"/>
<rect x="869" y="365" width="1" height="11" fill="#00ff00"/>
<rect x="867" y="365" width="5" height="11" fill="#00ff00"/>
<rect x="868" y="366" width="3" height="9" fill="#000000"/>
<rect x="877" y="363" width="1" height="13" fill="#00ff00"/>
<rect x="875" y="365" width="5" height="4" fill="#00ff00"/>
<rect x="876" y="366" width="3" height="2" fill="#ffffff"/>
<rect x="885" y="365" width="1" height="16" fill="#00ff00"/>
<rect x="883" y="368" width="5" height="7" fill="#00ff00"/>
<rect x="884" y="369" width="3" height="5" fill="#ffffff"/>
<rect x="893" y="370" width="1" height="17" fill="#00ff00"/>
<rect x="891" y="374" width="5" height="3" fill="#00ff00"/>
<rect x="901" y="365" width="1" height="16" fill="#00ff00"/>
<rect x="899" y="366" width="5" height="11" fill="#00ff00"/>
<rect x="900" y="367" width="3" height="9" fill="#000000"/>
<rect x="909" y="366" width="1" height="19" fill="#00ff00"/>
<rect x="907" y="367" width="5" height="14" fill="#00ff00"/>
<rect x="908" y="368" width="3" height="12" fill="#ffffff"/>
<rect x="917" y="374" width="1" height="10" fill="#00ff00"/>
<rect x="915" y="375" width="5" height="5" fill="#00ff00"/>
<rect x="916" y="376" width="3" height="3" fill="#000000"/>
<rect x="925" y="369" width="1" height="9" fill="#00ff00"/>
<rect x="923" y="372" width="5" height="4" fill="#00ff00"/>
<rect x="924" y="373" width="3" height="2" fill="#000000"/>
<rect x="933" y="370" width="1" height="19" fill="#00ff00"/>
<rect x="931" y="370" width="5" height="11" fill="#00ff00"/>
<rect x="932" y="371" width="3" height="9" fill="#ffffff"/>
<rect x="941" y="364" width="1" height="22" fill="#00ff00"/>
<rect x="939" y="376" width="5" height="5" fill="#00ff00"/>
<rect x="940" y="377" width="3" height="3" fill="#000000"/>
<rect x="949" y="361" width="1" height="22" fill="#00ff00"/>
<rect x="947" y="361" width="5" height="19" fill="#00ff00"/>
<rect x="948" y="362" width="3" height="17" fill="#000000"/>
<rect x="957" y="354" width="1" height="20" fill="#00ff00"/>
<rect x="955" y="362" width="5" height="11" fill="#00ff00"/>
<rect x="956" y="363" width="3" height="9" fill="#ffffff"/>
<rect x="965" y="358" width="1" height="25" fill="#00ff00"/>
<rect x="963" y="368" width="5" height="5" fill="#00ff00"/>
<rect x="964" y="369" width="3" height="3" fill="#000000"/>
<rect x="973" y="358" width="1" height="16" fill="#00ff00"/>
<rect x="971" y="367" width="5" height="2" fill="#00ff00"/>
<rect x="981" y="367" width="1" height="32" fill="#00ff00"/>
<rect x="979" y="368" width="5" height="19" fill="#00ff00"/>
<rect x="980" y="369" width="3" height="17" fill="#ffffff"/>
<rect x="989" y="384" width="1" height="16" fill="#00ff00"/>
<rect x="987" y="386" width="5" height="14" fill="#00ff00"/>
<rect x="988" y="387" width="3" height="12" fill="#ffffff"/>
<rect x="997" y="382" width="1" height="40" fill="#00ff00"/>
<rect x="995" y="390" width="5" height="11" fill="#00ff00"/>
<rect x="996" y="391" width="3" height="9" fill="#000000"/>
<rect x="1005" y="375" width="1" height="64" fill="#00ff00"/>
<rect x="1003" y="390" width="5" height="33" fill="#00ff00"/>
<rect x="1004" y="391" width="3" height="31" fill="#ffffff"/>
<rect x="1013" y="407" width="1" height="20" fill="#00ff00"/>
<rect x="1011" y="422" width="5" height="3" fill="#00ff00"/>
<rect x="1021" y="410" width="1" height="20" fill="#00ff00"/>
<rect x="1019" y="422" width="5" height="4" fill="#00ff00"/>
<rect x="1020" y="423" width="3" height="2" fill="#ffffff"/>
<rect x="1029" y="420" width="1" height="19" fill="#00ff00"/>
<rect x="1027" y="425" width="5" height="8" fill="#00ff00"/>
<rect x="1028" y="426" width="3" height="6" fill="#ffffff"/>
<rect x="1037" y="418" width="1" height="33" fill="#00ff00"/>
<rect x="1035" y="431" width="5" height="4" fill="#00ff00"/>
<rect x="1036" y="432" width="3" height="2" fill="#ffffff"/>
<rect x="1045" y="432" width="1" height="40" fill="#00ff00"/>
<rect x="1043" y="433" width="5" height="30" fill="#00ff00"/>
<rect x="1044" y="434" width="3" height="28" fill="#ffffff"/>
<rect x="1053" y="460" width="1" height="18" fill="#00ff00"/>
<rect x="1051" y="461" width="5" height="14" fill="#00ff00"/>
<rect x="1052" y="462" width="3" height="12" fill="#ffffff"/>
<rect x="1061" y="474" width="1" height="22" fill="#00ff00"/>
<rect x="1059" y="474" width="5" height="5" fill="#00ff00"/>
<rect x="1060" y="475" width="3" height="3" fill="#ffffff"/>
<rect x="1069" y="455" width="1" height="28" fill="#00ff00"/>
<rect x="1067" y="462" width="5" height="17" fill="#00ff00"/>
<rect x="1068" y="463" width="3" height="15" fill="#000000"/>
<rect x="1077" y="455" width="1" height="29" fill="#00ff00"/>
<rect x="1075" y="462" width="5" height="10" fill="#00ff00"/>
<rect x="1076" y="463" width="3" height="8" fill="#ffffff"/>
<rect x="1085" y="438" width="1" height="32" fill="#00ff00"/>
<rect x="1083" y="438" width="5" height="32" fill="#00ff00"/>
<rect x="1084" y="439" width="3" height="30" fill="#000000"/>
<rect x="1093" y="440" width="1" height="12" fill="#00ff00"/>
<rect x="1091" y="440" width="5" height="8" fill="#00ff00"/>
<rect x="1092" y="441" width="3" height="6" fill="#ffffff"/>
<rect x="1101" y="447" width="1" height="22" fill="#00ff00"/>
<rect x="1099" y="447" width="5" height="19" fill="#00ff00"/>
<rect x="1100" y="448" width="3" height="17" fill="#ffffff"/>
<rect x="1109" y="453" width="1" height="13" fill="#00ff00"/>
<rect x="1107" y="458" width="5" height="8" fill="#00ff00"/>
<rect x="1108" y="459" width="3" height="6" fill="#000000"/>
<rect x="1117" y="456" width="1" height="11" fill="#00ff00"/>
<rect x="1115" y="457" width="5" height="2" fill="#00ff00"/>
<rect x="1125" y="448" width="1" height="13" fill="#00ff00"/>
<rect x="1123" y="449" width="5" height="9" fill="#00ff00"/>
<rect x="1124" y="450" width="3" height="7" fill="#000000"/>
<rect x="1133" y="437" width="1" height="14" fill="#00ff00"/>
<rect x="1131" y="448" width="5" height="3" fill="#00ff00"/>
<rect x="1132" y="449" width="3" height="1" fill="#ffffff"/>
<rect x="1141" y="446" width="1" height="9" fill="#00ff00"/>
<rect x="1139" y="446" width="5" height="3" fill="#00ff00"/>
<rect x="1149" y="439" width="1" height="12" fill="#00ff00"/>
<rect x="1147" y="444" width="5" height="5" fill="#00ff00"/>
<rect x="1148" y="445" width="3" height="3" fill="#000000"/>
<rect x="1157" y="429" width="1" height="18" fill="#00ff00"/>
<rect x="1155" y="430" width="5" height="16" fill="#00ff00"/>
<rect x="1156" y="431" width="3" height="14" fill="#000000"/>
<rect x="1165" y="417" width="1" height="16" fill="#00ff00"/>
<rect x="1163" y="418" width="5" height="14" fill="#00ff00"/>
<rect x="1164" y="419" width="3" height="12" fill="#000000"/>
<rect x="1173" y="411" width="1" height="8" fill="#00ff00"/>
<rect x="1171" y="414" width="5" height="4" fill="#00ff00"/>
<rect x="1172" y="415" width="3" height="2" fill="#000000"/>
<rect x="1181" y="402" width="1" height="15" fill="#00ff00"/>
<rect x="1179" y="404" width="5" height="11" fill="#00ff00"/>
<rect x="1180" y="405" width="3" height="9" fill="#000000"/>
<rect x="1189" y="404" width="1" height="15" fill="#00ff00"/>
<rect x="1187" y="404" width="5" height="13" fill="#00ff00"/>
<rect x="1188" y="405" width="3" height="11" fill="#ffffff"/>
<rect x="1197" y="412" width="1" height="9" fill="#00ff00"/>
<rect x="1195" y="414" width="5" height="3" fill="#00ff00"/>
<rect x="1205" y="410" width="1" height="9" fill="#00ff00"/>
<rect x="1203" y="414" width="5" height="4" fill="#00ff00"/>
<rect x="1204" y="415" width="3" height="2" fill="#000000"/>
<rect x="1213" y="410" width="1" height="8" fill="#00ff00"/>
<rect x="1211" y="413" width="5" height="4" fill="#00ff00"/>
<rect x="1212" y="414" width="3" height="2" fill="#ffffff"/>
<rect x="1221" y="416" width="1" height="7" fill="#00ff00"/>
<rect x="1219" y="416" width="5" height="6" fill="#00ff00"/>
<rect x="1220" y="417" width="3" height="4" fill="#ffffff"/>
<rect x="13" y="415" width="1229" height="1" fill="#e01414"/>
<rect x="13" y="420" width="1229" height="1" fill="#c0c0c0"/>
<rect x="13" y="108" width="190" height="13" fill="#000"/>
<text x="18" y="118" font-size="9" fill="#fff" shape-rendering="auto">USDJPY,M15</text>
<text x="80" y="118" font-size="9" fill="#fff">90.641</text>
<text x="111" y="118" font-size="9" fill="#fff">90.641</text>
<text x="143" y="118" font-size="9" fill="#fff">90.608</text>
<text x="174" y="118" font-size="9" fill="#fff">90.618</text>
<rect x="1243" y="104" width="40" height="419" fill="#000"/>
<rect x="10" y="506" width="1272" height="17" fill="#000"/>
<rect x="12.5" y="106.5" width="1230" height="399" fill="none" stroke="#fff" shape-rendering="auto"/>
<rect x="1243" y="119" width="4" height="1" fill="#fff"/>
<text x="1248" y="121.7" font-size="9" fill="#fff">92.295</text>
<rect x="1243" y="151" width="4" height="1" fill="#fff"/>
<text x="1248" y="153.7" font-size="9" fill="#fff">92.120</text>
<rect x="1243" y="183" width="4" height="1" fill="#fff"/>
<text x="1248" y="185.7" font-size="9" fill="#fff">91.940</text>
<rect x="1243" y="215" width="4" height="1" fill="#fff"/>
<text x="1248" y="217.7" font-size="9" fill="#fff">91.760</text>
<rect x="1243" y="247" width="4" height="1" fill="#fff"/>
<text x="1248" y="249.7" font-size="9" fill="#fff">91.585</text>
<rect x="1243" y="279" width="4" height="1" fill="#fff"/>
<text x="1248" y="281.7" font-size="9" fill="#fff">91.405</text>
<rect x="1243" y="311" width="4" height="1" fill="#fff"/>
<text x="1248" y="313.7" font-size="9" fill="#fff">91.225</text>
<rect x="1243" y="343" width="4" height="1" fill="#fff"/>
<text x="1248" y="345.7" font-size="9" fill="#fff">91.050</text>
<rect x="1243" y="375" width="4" height="1" fill="#fff"/>
<text x="1248" y="377.7" font-size="9" fill="#fff">90.870</text>
<rect x="1243" y="407" width="4" height="1" fill="#fff"/>
<text x="1248" y="409.7" font-size="9" fill="#fff">90.690</text>
<rect x="1243" y="439" width="4" height="1" fill="#fff"/>
<text x="1248" y="441.7" font-size="9" fill="#fff">90.515</text>
<rect x="1243" y="471" width="4" height="1" fill="#fff"/>
<text x="1248" y="473.7" font-size="9" fill="#fff">90.335</text>
<rect x="1243" y="503" width="4" height="1" fill="#fff"/>
<text x="1248" y="505.7" font-size="9" fill="#fff">90.160</text>
<rect x="1243" y="409" width="37" height="6" fill="#ff0000"/>
<rect x="1243" y="415" width="37" height="11" fill="#fff"/>
<text x="1248" y="423.5" font-size="9" fill="#000">90.618</text>
<rect x="12" y="506" width="1" height="4" fill="#fff"/>
<text x="12" y="518" font-size="9" fill="#fff">10 Sep 2009</text>
<rect x="77" y="506" width="1" height="4" fill="#fff"/>
<text x="77" y="518" font-size="9" fill="#fff">10 Sep 09:00</text>
<rect x="141" y="506" width="1" height="4" fill="#fff"/>
<text x="141" y="518" font-size="9" fill="#fff">10 Sep 11:00</text>
<rect x="205" y="506" width="1" height="4" fill="#fff"/>
<text x="205" y="518" font-size="9" fill="#fff">10 Sep 13:00</text>
<rect x="269" y="506" width="1" height="4" fill="#fff"/>
<text x="269" y="518" font-size="9" fill="#fff">10 Sep 15:00</text>
<rect x="333" y="506" width="1" height="4" fill="#fff"/>
<text x="333" y="518" font-size="9" fill="#fff">10 Sep 17:00</text>
<rect x="397" y="506" width="1" height="4" fill="#fff"/>
<text x="397" y="518" font-size="9" fill="#fff">10 Sep 19:00</text>
<rect x="461" y="506" width="1" height="4" fill="#fff"/>
<text x="461" y="518" font-size="9" fill="#fff">10 Sep 21:00</text>
<rect x="525" y="506" width="1" height="4" fill="#fff"/>
<text x="525" y="518" font-size="9" fill="#fff">10 Sep 23:00</text>
<rect x="589" y="506" width="1" height="4" fill="#fff"/>
<text x="589" y="518" font-size="9" fill="#fff">11 Sep 01:00</text>
<rect x="653" y="506" width="1" height="4" fill="#fff"/>
<text x="653" y="518" font-size="9" fill="#fff">11 Sep 03:00</text>
<rect x="717" y="506" width="1" height="4" fill="#fff"/>
<text x="717" y="518" font-size="9" fill="#fff">11 Sep 05:00</text>
<rect x="781" y="506" width="1" height="4" fill="#fff"/>
<text x="781" y="518" font-size="9" fill="#fff">11 Sep 07:00</text>
<rect x="845" y="506" width="1" height="4" fill="#fff"/>
<text x="845" y="518" font-size="9" fill="#fff">11 Sep 09:00</text>
<rect x="909" y="506" width="1" height="4" fill="#fff"/>
<text x="909" y="518" font-size="9" fill="#fff">11 Sep 11:00</text>
<rect x="973" y="506" width="1" height="4" fill="#fff"/>
<text x="973" y="518" font-size="9" fill="#fff">11 Sep 13:00</text>
<rect x="1037" y="506" width="1" height="4" fill="#fff"/>
<text x="1037" y="518" font-size="9" fill="#fff">11 Sep 15:00</text>
<rect x="1101" y="506" width="1" height="4" fill="#fff"/>
<text x="1101" y="518" font-size="9" fill="#fff">11 Sep 17:00</text>
<rect x="1165" y="506" width="1" height="4" fill="#fff"/>
<text x="1165" y="518" font-size="9" fill="#fff">11 Sep 19:00</text>
</svg>
<div class="a" style="left:8px;top:523px;width:1276px;height:27px;background:#f0f0f0"></div>
<div class="a" style="left:8px;top:523px;width:1276px;height:2px;background:#fafafa"></div>
<div class="a" style="left:8px;top:525px;width:1274px;height:1px;background:#000"></div>
<div class="a" style="left:8px;top:526px;width:1px;height:19px;background:#707070"></div>
<div class="a" style="left:1281px;top:526px;width:1px;height:19px;background:#a0a0a0"></div>
<div class="a" style="left:9px;top:545px;width:1273px;height:2px;background:#f8f8f8"></div>
<div class="a" style="left:268px;top:523px;width:85px;height:21px;background:#fff;border:1px solid #000;border-top:none"></div>
<div class="t" style="left:22.5px;top:529px;font-size:10.3px;color:#6d6d6d">GBPUSD,M5</div>
<div class="t" style="left:103px;top:529px;font-size:10.3px;color:#6d6d6d">EURUSD,M15</div>
<div class="t" style="left:190.5px;top:529px;font-size:10.3px;color:#6d6d6d">USDCHF,M15</div>
<div class="t" style="left:278.5px;top:529px;font-size:10.3px;color:#000">USDJPY,M15</div>
<div class="t" style="left:362.5px;top:529px;font-size:10.3px;color:#6d6d6d">CADJPY,M15</div>
<div class="t" style="left:446.5px;top:529px;font-size:10.3px;color:#6d6d6d">USDCAD,M30</div>
<div class="t" style="left:534px;top:529px;font-size:10.3px;color:#6d6d6d">WTI,M5</div>
<div class="t" style="left:593.5px;top:529px;font-size:10.3px;color:#6d6d6d">GLD,M15</div>
<div class="t" style="left:658px;top:529px;font-size:10.3px;color:#6d6d6d">EURGBP,M5</div>
<div class="t" style="left:738px;top:529px;font-size:10.3px;color:#6d6d6d">EURCHF,M5</div>
<div class="t" style="left:820px;top:529px;font-size:10.3px;color:#6d6d6d">GBPJPY,M15</div>
<div class="t" style="left:901px;top:529px;font-size:10.3px;color:#6d6d6d">EURJPY,M5</div>
<div class="t" style="left:979px;top:529px;font-size:10.3px;color:#6d6d6d">WSFUT,M1</div>
<div class="t" style="left:1054px;top:529px;font-size:10.3px;color:#6d6d6d">GBPCAD,M5</div>
<div class="a" style="left:92px;top:528px;width:1px;height:14px;background:#505050"></div>
<div class="a" style="left:179px;top:528px;width:1px;height:14px;background:#505050"></div>
<div class="a" style="left:436px;top:528px;width:1px;height:14px;background:#505050"></div>
<div class="a" style="left:524px;top:528px;width:1px;height:14px;background:#505050"></div>
<div class="a" style="left:585px;top:528px;width:1px;height:14px;background:#505050"></div>
<div class="a" style="left:648px;top:528px;width:1px;height:14px;background:#505050"></div>
<div class="a" style="left:728px;top:528px;width:1px;height:14px;background:#505050"></div>
<div class="a" style="left:808px;top:528px;width:1px;height:14px;background:#505050"></div>
<div class="a" style="left:892px;top:528px;width:1px;height:14px;background:#505050"></div>
<div class="a" style="left:968px;top:528px;width:1px;height:14px;background:#505050"></div>
<div class="a" style="left:1044px;top:528px;width:1px;height:14px;background:#505050"></div>
<div class="a" style="left:1124px;top:528px;width:1px;height:14px;background:#505050"></div>
<svg class="a" style="left:1255px;top:532px" width="5" height="8" viewBox="0 0 5 8"><path d="M4.5 0.5v7l-4-3.5z" fill="#a0a0a0"/></svg>
<svg class="a" style="left:1272px;top:532px" width="5" height="8" viewBox="0 0 5 8"><path d="M0.5 0.5v7l4-3.5z" fill="#a0a0a0"/></svg>
<div class="a" style="left:8px;top:550px;width:1276px;height:207px;background:#f0f0f0"></div>
<div class="t" style="left:12px;top:549px;font-size:12px;font-weight:bold;color:#111">×</div>
<div class="a" style="left:8px;top:563px;width:15px;height:191px;background:linear-gradient(90deg,#a9bfd8,#bcd0e6 50%,#a9bfd8)"></div>
<div class="t" style="left:10px;top:751px;font-size:11px;color:#1b2a4a;transform:rotate(-90deg);transform-origin:0 0">Terminál</div>
<div class="a" style="left:23px;top:549px;width:890px;height:185px;background:#fff;border:1px solid #a0a0a0;border-bottom:none"></div>
<div class="a" style="left:24px;top:550px;width:869px;height:23px;background:linear-gradient(#ffffff,#f3f4f6);border-bottom:1px solid #d5d5d5"></div>
<div class="a" style="left:99px;top:551px;width:1px;height:22px;background:#e3e3e3"></div>
<div class="a" style="left:229px;top:551px;width:1px;height:22px;background:#e3e3e3"></div>
<div class="a" style="left:288px;top:551px;width:1px;height:22px;background:#e3e3e3"></div>
<div class="a" style="left:335px;top:551px;width:1px;height:22px;background:#e3e3e3"></div>
<div class="a" style="left:394px;top:551px;width:1px;height:22px;background:#e3e3e3"></div>
<div class="a" style="left:453px;top:551px;width:1px;height:22px;background:#e3e3e3"></div>
<div class="a" style="left:512px;top:551px;width:1px;height:22px;background:#e3e3e3"></div>
<div class="a" style="left:571px;top:551px;width:1px;height:22px;background:#e3e3e3"></div>
<div class="a" style="left:701px;top:551px;width:1px;height:22px;background:#e3e3e3"></div>
<div class="a" style="left:760px;top:551px;width:1px;height:22px;background:#e3e3e3"></div>
<div class="a" style="left:819px;top:551px;width:1px;height:22px;background:#e3e3e3"></div>
<div class="t" style="left:30px;top:557px;color:#1e1e1e">Pokyn</div>
<div class="t" style="right:1068px;top:557px;color:#1e1e1e">Čas</div>
<div class="t" style="right:1008px;top:557px;color:#1e1e1e">Typ</div>
<div class="t" style="right:962px;top:557px;color:#1e1e1e">Lotů</div>
<div class="t" style="left:350px;top:557px;color:#1e1e1e">Sy...</div>
<div class="t" style="left:380px;top:557px;color:#1e1e1e">/</div>
<div class="t" style="right:844px;top:557px;color:#1e1e1e">Cena</div>
<div class="t" style="left:460px;top:557px;color:#1e1e1e">Zastave...</div>
<div class="t" style="left:521px;top:557px;color:#1e1e1e">Realizo...</div>
<div class="t" style="right:596px;top:557px;color:#1e1e1e">Čas</div>
<div class="t" style="right:537px;top:557px;color:#1e1e1e">Cena</div>
<div class="t" style="right:478px;top:557px;color:#1e1e1e">Swap</div>
<div class="t" style="right:406px;top:557px;color:#1e1e1e">Zisk</div>
<div class="a" style="left:24px;top:574px;width:869px;height:20px;background:#ffffff"></div>
<div class="a" style="left:99px;top:574px;width:1px;height:20px;background:#c8c8c8"></div>
<div class="a" style="left:229px;top:574px;width:1px;height:20px;background:#c8c8c8"></div>
<div class="a" style="left:288px;top:574px;width:1px;height:20px;background:#c8c8c8"></div>
<div class="a" style="left:819px;top:574px;width:1px;height:20px;background:#c8c8c8"></div>
<div class="t" style="left:48px;top:579px;color:#000000">8520455</div>
<div class="t" style="right:1066px;top:579px;color:#000000">2009.07.13 09:45</div>
<div class="t" style="right:1006px;top:579px;color:#000000">balance</div>
<div class="t" style="right:476px;top:579px;color:#000000">Wire Transfer Re:25153826</div>
<div class="t" style="right:404px;top:579px;color:#000000">3 500.00</div>
<div class="a" style="left:27px;top:577px;width:12px;height:13px;border:1px solid #555;border-radius:1px;background:linear-gradient(#fff,#e8e8e8)"></div>
<svg class="a" style="left:29px;top:579px" width="9" height="9" viewBox="0 0 9 9"><path d="M4.5 0.5 L8.5 4.5 L6 4.5 L6 8.5 L3 8.5 L3 4.5 L0.5 4.5 Z" fill="#2aa02a" stroke="#0a600a" stroke-width="0.8"/></svg>
<div class="a" style="left:24px;top:594px;width:869px;height:20px;background:#3399ff"></div>
<div class="a" style="left:99px;top:594px;width:1px;height:20px;background:#5aacff"></div>
<div class="a" style="left:229px;top:594px;width:1px;height:20px;background:#5aacff"></div>
<div class="a" style="left:288px;top:594px;width:1px;height:20px;background:#5aacff"></div>
<div class="a" style="left:819px;top:594px;width:1px;height:20px;background:#5aacff"></div>
<div class="t" style="left:48px;top:599px;color:#ffffff">9465565</div>
<div class="t" style="right:1066px;top:599px;color:#ffffff">2009.09.02 09:06</div>
<div class="t" style="right:1006px;top:599px;color:#ffffff">balance</div>
<div class="t" style="right:476px;top:599px;color:#ffffff">Wire Transfer Re:27224690</div>
<div class="t" style="right:404px;top:599px;color:#ffffff">-3 500.00</div>
<div class="a" style="left:27px;top:597px;width:12px;height:13px;border:1px solid #555;border-radius:1px;background:linear-gradient(#fff,#e8e8e8)"></div>
<svg class="a" style="left:29px;top:599px" width="9" height="9" viewBox="0 0 9 9"><path d="M4.5 8.5 L8.5 4.5 L6 4.5 L6 0.5 L3 0.5 L3 4.5 L0.5 4.5 Z" fill="#f05a1a" stroke="#a02a0a" stroke-width="0.8"/></svg>
<div class="a" style="left:24px;top:614px;width:869px;height:20px;background:#ffffff"></div>
<div class="a" style="left:99px;top:614px;width:1px;height:20px;background:#c8c8c8"></div>
<div class="a" style="left:229px;top:614px;width:1px;height:20px;background:#c8c8c8"></div>
<div class="a" style="left:288px;top:614px;width:1px;height:20px;background:#c8c8c8"></div>
<div class="a" style="left:335px;top:614px;width:1px;height:20px;background:#c8c8c8"></div>
<div class="a" style="left:394px;top:614px;width:1px;height:20px;background:#c8c8c8"></div>
<div class="a" style="left:453px;top:614px;width:1px;height:20px;background:#c8c8c8"></div>
<div class="a" style="left:512px;top:614px;width:1px;height:20px;background:#c8c8c8"></div>
<div class="a" style="left:571px;top:614px;width:1px;height:20px;background:#c8c8c8"></div>
<div class="a" style="left:701px;top:614px;width:1px;height:20px;background:#c8c8c8"></div>
<div class="a" style="left:760px;top:614px;width:1px;height:20px;background:#c8c8c8"></div>
<div class="a" style="left:819px;top:614px;width:1px;height:20px;background:#c8c8c8"></div>
<div class="t" style="left:48px;top:619px;color:#000000">8528671</div>
<div class="t" style="right:1066px;top:619px;color:#000000">2009.07.13 14:05</div>
<div class="t" style="right:1006px;top:619px;color:#000000">buy</div>
<div class="t" style="right:960px;top:619px;color:#000000">0.20</div>
<div class="t" style="right:900px;top:619px;color:#000000">cadjpy</div>
<div class="t" style="right:842px;top:619px;color:#000000">79.13</div>
<div class="t" style="right:783px;top:619px;color:#000000">0.00</div>
<div class="t" style="right:724px;top:619px;color:#000000">79.45</div>
<div class="t" style="right:594px;top:619px;color:#000000">2009.07.13 14:16</div>
<div class="t" style="right:535px;top:619px;color:#000000">79.26</div>
<div class="t" style="right:476px;top:619px;color:#000000">0.00</div>
<div class="t" style="right:404px;top:619px;color:#000000">20.23</div>
<svg class="a" style="left:27px;top:617px" width="14" height="15" viewBox="0 0 14 15"><path d="M0.5 0.5 H6.5 L9.5 3.5 V13.5 H0.5 Z" fill="#fff" stroke="#555"/><path d="M6.5 0.5 V3.5 H9.5" fill="none" stroke="#555"/><circle cx="10" cy="11" r="3.3" fill="#2a8ae0" stroke="#803010" stroke-width="0.6"/></svg>
<div class="a" style="left:24px;top:634px;width:869px;height:20px;background:#ececec"></div>
<div class="a" style="left:99px;top:634px;width:1px;height:20px;background:#c8c8c8"></div>
<div class="a" style="left:229px;top:634px;width:1px;height:20px;background:#c8c8c8"></div>
<div class="a" style="left:288px;top:634px;width:1px;height:20px;background:#c8c8c8"></div>
<div class="a" style="left:335px;top:634px;width:1px;height:20px;background:#c8c8c8"></div>
<div class="a" style="left:394px;top:634px;width:1px;height:20px;background:#c8c8c8"></div>
<div class="a" style="left:453px;top:634px;width:1px;height:20px;background:#c8c8c8"></div>
<div class="a" style="left:512px;top:634px;width:1px;height:20px;background:#c8c8c8"></div>
<div class="a" style="left:571px;top:634px;width:1px;height:20px;background:#c8c8c8"></div>
<div class="a" style="left:701px;top:634px;width:1px;height:20px;background:#c8c8c8"></div>
<div class="a" style="left:760px;top:634px;width:1px;height:20px;background:#c8c8c8"></div>
<div class="a" style="left:819px;top:634px;width:1px;height:20px;background:#c8c8c8"></div>
<div class="a" style="left:24px;top:634px;width:869px;height:1px;background:#d4d4d4"></div>
<div class="t" style="left:48px;top:639px;color:#000000">8778718</div>
<div class="t" style="right:1066px;top:639px;color:#000000">2009.07.24 13:04</div>
<div class="t" style="right:1006px;top:639px;color:#000000">sell</div>
<div class="t" style="right:960px;top:639px;color:#000000">0.30</div>
<div class="t" style="right:900px;top:639px;color:#000000">cadjpy</div>
<div class="t" style="right:842px;top:639px;color:#000000">87.70</div>
<div class="t" style="right:783px;top:639px;color:#000000">0.00</div>
<div class="t" style="right:724px;top:639px;color:#000000">0.00</div>
<div class="t" style="right:594px;top:639px;color:#000000">2009.07.24 13:37</div>
<div class="t" style="right:535px;top:639px;color:#000000">87.68</div>
<div class="t" style="right:476px;top:639px;color:#000000">0.00</div>
<div class="t" style="right:404px;top:639px;color:#000000">4.45</div>
<svg class="a" style="left:27px;top:637px" width="14" height="15" viewBox="0 0 14 15"><path d="M0.5 0.5 H6.5 L9.5 3.5 V13.5 H0.5 Z" fill="#fff" stroke="#555"/><path d="M6.5 0.5 V3.5 H9.5" fill="none" stroke="#555"/><circle cx="10" cy="11" r="3.3" fill="#e05020" stroke="#803010" stroke-width="0.6"/></svg>
<div class="a" style="left:24px;top:654px;width:869px;height:20px;background:#ffffff"></div>
<div class="a" style="left:99px;top:654px;width:1px;height:20px;background:#c8c8c8"></div>
<div class="a" style="left:229px;top:654px;width:1px;height:20px;background:#c8c8c8"></div>
<div class="a" style="left:288px;top:654px;width:1px;height:20px;background:#c8c8c8"></div>
<div class="a" style="left:335px;top:654px;width:1px;height:20px;background:#c8c8c8"></div>
<div class="a" style="left:394px;top:654px;width:1px;height:20px;background:#c8c8c8"></div>
<div class="a" style="left:453px;top:654px;width:1px;height:20px;background:#c8c8c8"></div>
<div class="a" style="left:512px;top:654px;width:1px;height:20px;background:#c8c8c8"></div>
<div class="a" style="left:571px;top:654px;width:1px;height:20px;background:#c8c8c8"></div>
<div class="a" style="left:701px;top:654px;width:1px;height:20px;background:#c8c8c8"></div>
<div class="a" style="left:760px;top:654px;width:1px;height:20px;background:#c8c8c8"></div>
<div class="a" style="left:819px;top:654px;width:1px;height:20px;background:#c8c8c8"></div>
<div class="a" style="left:24px;top:654px;width:869px;height:1px;background:#d4d4d4"></div>
<div class="t" style="left:48px;top:659px;color:#000000">8779554</div>
<div class="t" style="right:1066px;top:659px;color:#000000">2009.07.24 13:42</div>
<div class="t" style="right:1006px;top:659px;color:#000000">sell</div>
<div class="t" style="right:960px;top:659px;color:#000000">0.30</div>
<div class="t" style="right:900px;top:659px;color:#000000">cadjpy</div>
<div class="t" style="right:842px;top:659px;color:#000000">87.81</div>
<div class="t" style="right:783px;top:659px;color:#000000">0.00</div>
<div class="t" style="right:724px;top:659px;color:#000000">0.00</div>
<div class="t" style="right:594px;top:659px;color:#000000">2009.07.24 13:51</div>
<div class="t" style="right:535px;top:659px;color:#000000">87.65</div>
<div class="t" style="right:476px;top:659px;color:#000000">0.00</div>
<div class="t" style="right:404px;top:659px;color:#000000">35.58</div>
<svg class="a" style="left:27px;top:657px" width="14" height="15" viewBox="0 0 14 15"><path d="M0.5 0.5 H6.5 L9.5 3.5 V13.5 H0.5 Z" fill="#fff" stroke="#555"/><path d="M6.5 0.5 V3.5 H9.5" fill="none" stroke="#555"/><circle cx="10" cy="11" r="3.3" fill="#e05020" stroke="#803010" stroke-width="0.6"/></svg>
<div class="a" style="left:24px;top:674px;width:869px;height:20px;background:#ececec"></div>
<div class="a" style="left:99px;top:674px;width:1px;height:20px;background:#c8c8c8"></div>
<div class="a" style="left:229px;top:674px;width:1px;height:20px;background:#c8c8c8"></div>
<div class="a" style="left:288px;top:674px;width:1px;height:20px;background:#c8c8c8"></div>
<div class="a" style="left:335px;top:674px;width:1px;height:20px;background:#c8c8c8"></div>
<div class="a" style="left:394px;top:674px;width:1px;height:20px;background:#c8c8c8"></div>
<div class="a" style="left:453px;top:674px;width:1px;height:20px;background:#c8c8c8"></div>
<div class="a" style="left:512px;top:674px;width:1px;height:20px;background:#c8c8c8"></div>
<div class="a" style="left:571px;top:674px;width:1px;height:20px;background:#c8c8c8"></div>
<div class="a" style="left:701px;top:674px;width:1px;height:20px;background:#c8c8c8"></div>
<div class="a" style="left:760px;top:674px;width:1px;height:20px;background:#c8c8c8"></div>
<div class="a" style="left:819px;top:674px;width:1px;height:20px;background:#c8c8c8"></div>
<div class="a" style="left:24px;top:674px;width:869px;height:1px;background:#d4d4d4"></div>
<div class="t" style="left:48px;top:679px;color:#000000">8796100</div>
<div class="t" style="right:1066px;top:679px;color:#000000">2009.07.27 09:55</div>
<div class="t" style="right:1006px;top:679px;color:#000000">sell</div>
<div class="t" style="right:960px;top:679px;color:#000000">0.20</div>
<div class="t" style="right:900px;top:679px;color:#000000">cadjpy</div>
<div class="t" style="right:842px;top:679px;color:#000000">87.865</div>
<div class="t" style="right:783px;top:679px;color:#000000">0.000</div>
<div class="t" style="right:724px;top:679px;color:#000000">87.200</div>
<div class="t" style="right:594px;top:679px;color:#000000">2009.07.28 09:12</div>
<div class="t" style="right:535px;top:679px;color:#000000">87.798</div>
<div class="t" style="right:476px;top:679px;color:#000000">-0.30</div>
<div class="t" style="right:404px;top:679px;color:#000000">9.92</div>
<svg class="a" style="left:27px;top:677px" width="14" height="15" viewBox="0 0 14 15"><path d="M0.5 0.5 H6.5 L9.5 3.5 V13.5 H0.5 Z" fill="#fff" stroke="#555"/><path d="M6.5 0.5 V3.5 H9.5" fill="none" stroke="#555"/><circle cx="10" cy="11" r="3.3" fill="#e05020" stroke="#803010" stroke-width="0.6"/></svg>
<div class="a" style="left:24px;top:694px;width:869px;height:20px;background:#ffffff"></div>
<div class="a" style="left:99px;top:694px;width:1px;height:20px;background:#c8c8c8"></div>
<div class="a" style="left:229px;top:694px;width:1px;height:20px;background:#c8c8c8"></div>
<div class="a" style="left:288px;top:694px;width:1px;height:20px;background:#c8c8c8"></div>
<div class="a" style="left:335px;top:694px;width:1px;height:20px;background:#c8c8c8"></div>
<div class="a" style="left:394px;top:694px;width:1px;height:20px;background:#c8c8c8"></div>
<div class="a" style="left:453px;top:694px;width:1px;height:20px;background:#c8c8c8"></div>
<div class="a" style="left:512px;top:694px;width:1px;height:20px;background:#c8c8c8"></div>
<div class="a" style="left:571px;top:694px;width:1px;height:20px;background:#c8c8c8"></div>
<div class="a" style="left:701px;top:694px;width:1px;height:20px;background:#c8c8c8"></div>
<div class="a" style="left:760px;top:694px;width:1px;height:20px;background:#c8c8c8"></div>
<div class="a" style="left:819px;top:694px;width:1px;height:20px;background:#c8c8c8"></div>
<div class="a" style="left:24px;top:694px;width:869px;height:1px;background:#d4d4d4"></div>
<div class="t" style="left:48px;top:699px;color:#000000">8813935</div>
<div class="t" style="right:1066px;top:699px;color:#000000">2009.07.28 05:45</div>
<div class="t" style="right:1006px;top:699px;color:#000000">sell</div>
<div class="t" style="right:960px;top:699px;color:#000000">0.20</div>
<div class="t" style="right:900px;top:699px;color:#000000">cadjpy</div>
<div class="t" style="right:842px;top:699px;color:#000000">88.194</div>
<div class="t" style="right:783px;top:699px;color:#000000">0.000</div>
<div class="t" style="right:724px;top:699px;color:#000000">0.000</div>
<div class="t" style="right:594px;top:699px;color:#000000">2009.07.28 05:53</div>
<div class="t" style="right:535px;top:699px;color:#000000">88.178</div>
<div class="t" style="right:476px;top:699px;color:#000000">0.00</div>
<div class="t" style="right:404px;top:699px;color:#000000">2.35</div>
<svg class="a" style="left:27px;top:697px" width="14" height="15" viewBox="0 0 14 15"><path d="M0.5 0.5 H6.5 L9.5 3.5 V13.5 H0.5 Z" fill="#fff" stroke="#555"/><path d="M6.5 0.5 V3.5 H9.5" fill="none" stroke="#555"/><circle cx="10" cy="11" r="3.3" fill="#e05020" stroke="#803010" stroke-width="0.6"/></svg>
<div class="a" style="left:24px;top:714px;width:869px;height:20px;background:#ececec"></div>
<div class="a" style="left:99px;top:714px;width:1px;height:20px;background:#c8c8c8"></div>
<div class="a" style="left:229px;top:714px;width:1px;height:20px;background:#c8c8c8"></div>
<div class="a" style="left:288px;top:714px;width:1px;height:20px;background:#c8c8c8"></div>
<div class="a" style="left:335px;top:714px;width:1px;height:20px;background:#c8c8c8"></div>
<div class="a" style="left:394px;top:714px;width:1px;height:20px;background:#c8c8c8"></div>
<div class="a" style="left:453px;top:714px;width:1px;height:20px;background:#c8c8c8"></div>
<div class="a" style="left:512px;top:714px;width:1px;height:20px;background:#c8c8c8"></div>
<div class="a" style="left:571px;top:714px;width:1px;height:20px;background:#c8c8c8"></div>
<div class="a" style="left:701px;top:714px;width:1px;height:20px;background:#c8c8c8"></div>
<div class="a" style="left:760px;top:714px;width:1px;height:20px;background:#c8c8c8"></div>
<div class="a" style="left:819px;top:714px;width:1px;height:20px;background:#c8c8c8"></div>
<div class="a" style="left:24px;top:714px;width:869px;height:1px;background:#d4d4d4"></div>
<div class="t" style="left:48px;top:719px;color:#000000">8905490</div>
<div class="t" style="right:1066px;top:719px;color:#000000">2009.07.31 09:13</div>
<div class="t" style="right:1006px;top:719px;color:#000000">sell</div>
<div class="t" style="right:960px;top:719px;color:#000000">0.30</div>
<div class="t" style="right:900px;top:719px;color:#000000">cadjpy</div>
<div class="t" style="right:842px;top:719px;color:#000000">88.504</div>
<div class="t" style="right:783px;top:719px;color:#000000">0.000</div>
<div class="t" style="right:724px;top:719px;color:#000000">0.000</div>
<div class="t" style="right:594px;top:719px;color:#000000">2009.07.31 12:35</div>
<div class="t" style="right:535px;top:719px;color:#000000">88.433</div>
<div class="t" style="right:476px;top:719px;color:#000000">0.00</div>
<div class="t" style="right:404px;top:719px;color:#000000">15.79</div>
<svg class="a" style="left:27px;top:717px" width="14" height="15" viewBox="0 0 14 15"><path d="M0.5 0.5 H6.5 L9.5 3.5 V13.5 H0.5 Z" fill="#fff" stroke="#555"/><path d="M6.5 0.5 V3.5 H9.5" fill="none" stroke="#555"/><circle cx="10" cy="11" r="3.3" fill="#e05020" stroke="#803010" stroke-width="0.6"/></svg>
<div class="a" style="left:893px;top:550px;width:19px;height:184px;background:#f0f0f0;border-left:1px solid #e0e0e0"></div>
<svg class="a" style="left:898px;top:555px" width="9" height="5" viewBox="0 0 9 5"><path d="M0.5 4.5 L4.5 0.5 L8.5 4.5 Z" fill="#404040"/></svg>
<div class="a" style="left:894px;top:567px;width:16px;height:17px;border:1px solid #a0a0a0;border-radius:2px;background:linear-gradient(90deg,#f4f4f4,#dcdcdc)"></div>
<svg class="a" style="left:898px;top:722px" width="9" height="5" viewBox="0 0 9 5"><path d="M0.5 0.5 L4.5 4.5 L8.5 0.5 Z" fill="#404040"/></svg>
<div class="a" style="left:24px;top:733px;width:889px;height:1px;background:#000"></div>
<div class="a" style="left:82px;top:733px;width:82px;height:19px;background:#fff;border:1px solid #000;border-top:none"></div>
<div class="t" style="left:35px;top:737px;color:#6d6d6d">Obchod</div>
<div class="t" style="left:92px;top:737px;color:#000">Historie účtu</div>
<div class="t" style="left:172px;top:737px;color:#6d6d6d">Zprávy</div>
<div class="t" style="left:226px;top:737px;color:#6d6d6d">Alarmy</div>
<div class="t" style="left:279px;top:737px;color:#6d6d6d">Poštovní schránka</div>
<div class="t" style="left:386px;top:737px;color:#6d6d6d">Strategie</div>
<div class="t" style="left:449px;top:737px;color:#6d6d6d">Deník</div>
<div class="a" style="left:217px;top:738px;width:1px;height:10px;background:#777"></div>
<div class="a" style="left:270px;top:738px;width:1px;height:10px;background:#777"></div>
<div class="a" style="left:377px;top:738px;width:1px;height:10px;background:#777"></div>
<div class="a" style="left:440px;top:738px;width:1px;height:10px;background:#777"></div>
<div class="a" style="left:487px;top:738px;width:1px;height:10px;background:#777"></div>
<div class="a" style="left:913px;top:550px;width:1px;height:206px;background:#c8c8c8"></div>
<div class="t" style="left:920px;top:549px;font-size:12px;font-weight:bold;color:#111">×</div>
<div class="a" style="left:917px;top:563px;width:14px;height:191px;background:linear-gradient(90deg,#c5d3e2,#d5e1ee 50%,#c5d3e2)"></div>
<div class="a" style="left:917px;top:705px;width:14px;height:48px;background:#a9b8c8"></div>
<div class="t" style="left:918px;top:751px;font-size:11px;color:#5a6a7e;transform:rotate(-90deg);transform-origin:0 0">20:59:53</div>
<div class="a" style="left:931px;top:549px;width:351px;height:185px;background:#ffffe6;border:1px solid #a0a0a0;border-bottom:none"></div>
<div class="a" style="left:932px;top:550px;width:331px;height:23px;background:linear-gradient(#ffffff,#f3f4f6);border-bottom:1px solid #d5d5d5"></div>
<div class="a" style="left:1006px;top:551px;width:1px;height:22px;background:#e3e3e3"></div>
<div class="a" style="left:1057px;top:551px;width:1px;height:22px;background:#e3e3e3"></div>
<div class="a" style="left:1108px;top:551px;width:1px;height:22px;background:#e3e3e3"></div>
<div class="a" style="left:1159px;top:551px;width:1px;height:22px;background:#e3e3e3"></div>
<div class="a" style="left:1210px;top:551px;width:1px;height:22px;background:#e3e3e3"></div>
<div class="t" style="left:938px;top:557px;color:#1e1e1e">Symbol</div>
<div class="t" style="right:238px;top:557px;color:#1e1e1e">Poptá...</div>
<div class="t" style="right:187px;top:557px;color:#1e1e1e">Nabí...</div>
<div class="t" style="right:136px;top:557px;color:#1e1e1e">Maxi...</div>
<div class="t" style="right:85px;top:557px;color:#1e1e1e">Mini...</div>
<div class="t" style="right:34px;top:557px;color:#1e1e1e">Čas</div>
<div class="a" style="left:1006px;top:574px;width:1px;height:20px;background:#c8c8c0"></div>
<div class="a" style="left:1057px;top:574px;width:1px;height:20px;background:#c8c8c0"></div>
<div class="a" style="left:1108px;top:574px;width:1px;height:20px;background:#c8c8c0"></div>
<div class="a" style="left:1159px;top:574px;width:1px;height:20px;background:#c8c8c0"></div>
<div class="a" style="left:1210px;top:574px;width:1px;height:20px;background:#c8c8c0"></div>
<svg class="a" style="left:936px;top:579px" width="11" height="10" viewBox="0 0 11 10"><path d="M5.5 9.4 L10.4 4.8 L7.6 4.8 L7.6 0.6 L3.4 0.6 L3.4 4.8 L0.6 4.8 Z" fill="#f06a30" stroke="#902a10" stroke-width="0.9" stroke-linejoin="round"/></svg>
<div class="t" style="left:952px;top:579px;color:#000">EURUSD</div>
<div class="t" style="right:238px;top:579px;color:#cc1616">1.45751</div>
<div class="t" style="right:187px;top:579px;color:#cc1616">1.45773</div>
<div class="t" style="right:136px;top:579px;color:#cc1616">1.46346</div>
<div class="t" style="right:85px;top:579px;color:#cc1616">1.45525</div>
<div class="t" style="right:34px;top:579px;color:#cc1616">20:49</div>
<div class="a" style="left:1006px;top:594px;width:1px;height:20px;background:#c8c8c0"></div>
<div class="a" style="left:1057px;top:594px;width:1px;height:20px;background:#c8c8c0"></div>
<div class="a" style="left:1108px;top:594px;width:1px;height:20px;background:#c8c8c0"></div>
<div class="a" style="left:1159px;top:594px;width:1px;height:20px;background:#c8c8c0"></div>
<div class="a" style="left:1210px;top:594px;width:1px;height:20px;background:#c8c8c0"></div>
<div class="a" style="left:932px;top:594px;width:331px;height:1px;background:#cfcfc6"></div>
<svg class="a" style="left:936px;top:599px" width="11" height="10" viewBox="0 0 11 10"><path d="M5.5 9.4 L10.4 4.8 L7.6 4.8 L7.6 0.6 L3.4 0.6 L3.4 4.8 L0.6 4.8 Z" fill="#f06a30" stroke="#902a10" stroke-width="0.9" stroke-linejoin="round"/></svg>
<div class="t" style="left:952px;top:599px;color:#000">USDJPY</div>
<div class="t" style="right:238px;top:599px;color:#cc1616">90.618</div>
<div class="t" style="right:187px;top:599px;color:#cc1616">90.646</div>
<div class="t" style="right:136px;top:599px;color:#cc1616">91.709</div>
<div class="t" style="right:85px;top:599px;color:#cc1616">90.203</div>
<div class="t" style="right:34px;top:599px;color:#cc1616">20:49</div>
<div class="a" style="left:1006px;top:614px;width:1px;height:20px;background:#c8c8c0"></div>
<div class="a" style="left:1057px;top:614px;width:1px;height:20px;background:#c8c8c0"></div>
<div class="a" style="left:1108px;top:614px;width:1px;height:20px;background:#c8c8c0"></div>
<div class="a" style="left:1159px;top:614px;width:1px;height:20px;background:#c8c8c0"></div>
<div class="a" style="left:1210px;top:614px;width:1px;height:20px;background:#c8c8c0"></div>
<div class="a" style="left:932px;top:614px;width:331px;height:1px;background:#cfcfc6"></div>
<svg class="a" style="left:936px;top:619px" width="11" height="10" viewBox="0 0 11 10"><path d="M5.5 0.6 L10.4 5.2 L7.6 5.2 L7.6 9.4 L3.4 9.4 L3.4 5.2 L0.6 5.2 Z" fill="#30b030" stroke="#106010" stroke-width="0.9" stroke-linejoin="round"/></svg>
<div class="t" style="left:952px;top:619px;color:#000">USDCHF</div>
<div class="t" style="right:238px;top:619px;color:#1c1caa">1.03743</div>
<div class="t" style="right:187px;top:619px;color:#1c1caa">1.03783</div>
<div class="t" style="right:136px;top:619px;color:#1c1caa">1.03981</div>
<div class="t" style="right:85px;top:619px;color:#1c1caa">1.03384</div>
<div class="t" style="right:34px;top:619px;color:#1c1caa">20:49</div>
<div class="a" style="left:1006px;top:634px;width:1px;height:20px;background:#c8c8c0"></div>
<div class="a" style="left:1057px;top:634px;width:1px;height:20px;background:#c8c8c0"></div>
<div class="a" style="left:1108px;top:634px;width:1px;height:20px;background:#c8c8c0"></div>
<div class="a" style="left:1159px;top:634px;width:1px;height:20px;background:#c8c8c0"></div>
<div class="a" style="left:1210px;top:634px;width:1px;height:20px;background:#c8c8c0"></div>
<div class="a" style="left:932px;top:634px;width:331px;height:1px;background:#cfcfc6"></div>
<svg class="a" style="left:936px;top:639px" width="11" height="10" viewBox="0 0 11 10"><path d="M5.5 0.6 L10.4 5.2 L7.6 5.2 L7.6 9.4 L3.4 9.4 L3.4 5.2 L0.6 5.2 Z" fill="#30b030" stroke="#106010" stroke-width="0.9" stroke-linejoin="round"/></svg>
<div class="t" style="left:952px;top:639px;color:#000">GBPUSD</div>
<div class="t" style="right:238px;top:639px;color:#1c1caa">1.66709</div>
<div class="t" style="right:187px;top:639px;color:#1c1caa">1.66759</div>
<div class="t" style="right:136px;top:639px;color:#1c1caa">1.67403</div>
<div class="t" style="right:85px;top:639px;color:#1c1caa">1.66421</div>
<div class="t" style="right:34px;top:639px;color:#1c1caa">20:49</div>
<div class="a" style="left:1006px;top:654px;width:1px;height:20px;background:#c8c8c0"></div>
<div class="a" style="left:1057px;top:654px;width:1px;height:20px;background:#c8c8c0"></div>
<div class="a" style="left:1108px;top:654px;width:1px;height:20px;background:#c8c8c0"></div>
<div class="a" style="left:1159px;top:654px;width:1px;height:20px;background:#c8c8c0"></div>
<div class="a" style="left:1210px;top:654px;width:1px;height:20px;background:#c8c8c0"></div>
<div class="a" style="left:932px;top:654px;width:331px;height:1px;background:#cfcfc6"></div>
<svg class="a" style="left:936px;top:659px" width="11" height="10" viewBox="0 0 11 10"><path d="M5.5 0.6 L10.4 5.2 L7.6 5.2 L7.6 9.4 L3.4 9.4 L3.4 5.2 L0.6 5.2 Z" fill="#30b030" stroke="#106010" stroke-width="0.9" stroke-linejoin="round"/></svg>
<div class="t" style="left:952px;top:659px;color:#000">AUDUSD</div>
<div class="t" style="right:238px;top:659px;color:#1c1caa">0.86308</div>
<div class="t" style="right:187px;top:659px;color:#1c1caa">0.86383</div>
<div class="t" style="right:136px;top:659px;color:#1c1caa">0.86748</div>
<div class="t" style="right:85px;top:659px;color:#1c1caa">0.86059</div>
<div class="t" style="right:34px;top:659px;color:#1c1caa">20:49</div>
<div class="a" style="left:1006px;top:674px;width:1px;height:20px;background:#c8c8c0"></div>
<div class="a" style="left:1057px;top:674px;width:1px;height:20px;background:#c8c8c0"></div>
<div class="a" style="left:1108px;top:674px;width:1px;height:20px;background:#c8c8c0"></div>
<div class="a" style="left:1159px;top:674px;width:1px;height:20px;background:#c8c8c0"></div>
<div class="a" style="left:1210px;top:674px;width:1px;height:20px;background:#c8c8c0"></div>
<div class="a" style="left:932px;top:674px;width:331px;height:1px;background:#cfcfc6"></div>
<svg class="a" style="left:936px;top:679px" width="11" height="10" viewBox="0 0 11 10"><path d="M5.5 0.6 L10.4 5.2 L7.6 5.2 L7.6 9.4 L3.4 9.4 L3.4 5.2 L0.6 5.2 Z" fill="#30b030" stroke="#106010" stroke-width="0.9" stroke-linejoin="round"/></svg>
<div class="t" style="left:952px;top:679px;color:#000">NZDUSD</div>
<div class="t" style="right:238px;top:679px;color:#1c1caa">0.70599</div>
<div class="t" style="right:187px;top:679px;color:#1c1caa">0.70699</div>
<div class="t" style="right:136px;top:679px;color:#1c1caa">0.70869</div>
<div class="t" style="right:85px;top:679px;color:#1c1caa">0.70118</div>
<div class="t" style="right:34px;top:679px;color:#1c1caa">20:49</div>
<div class="a" style="left:1006px;top:694px;width:1px;height:20px;background:#c8c8c0"></div>
<div class="a" style="left:1057px;top:694px;width:1px;height:20px;background:#c8c8c0"></div>
<div class="a" style="left:1108px;top:694px;width:1px;height:20px;background:#c8c8c0"></div>
<div class="a" style="left:1159px;top:694px;width:1px;height:20px;background:#c8c8c0"></div>
<div class="a" style="left:1210px;top:694px;width:1px;height:20px;background:#c8c8c0"></div>
<div class="a" style="left:932px;top:694px;width:331px;height:1px;background:#cfcfc6"></div>
<svg class="a" style="left:936px;top:699px" width="11" height="10" viewBox="0 0 11 10"><path d="M5.5 9.4 L10.4 4.8 L7.6 4.8 L7.6 0.6 L3.4 0.6 L3.4 4.8 L0.6 4.8 Z" fill="#f06a30" stroke="#902a10" stroke-width="0.9" stroke-linejoin="round"/></svg>
<div class="t" style="left:952px;top:699px;color:#000">USDCAD</div>
<div class="t" style="right:238px;top:699px;color:#cc1616">1.07696</div>
<div class="t" style="right:187px;top:699px;color:#cc1616">1.07753</div>
<div class="t" style="right:136px;top:699px;color:#cc1616">1.07921</div>
<div class="t" style="right:85px;top:699px;color:#cc1616">1.07145</div>
<div class="t" style="right:34px;top:699px;color:#cc1616">20:49</div>
<div class="a" style="left:1006px;top:714px;width:1px;height:20px;background:#c8c8c0"></div>
<div class="a" style="left:1057px;top:714px;width:1px;height:20px;background:#c8c8c0"></div>
<div class="a" style="left:1108px;top:714px;width:1px;height:20px;background:#c8c8c0"></div>
<div class="a" style="left:1159px;top:714px;width:1px;height:20px;background:#c8c8c0"></div>
<div class="a" style="left:1210px;top:714px;width:1px;height:20px;background:#c8c8c0"></div>
<div class="a" style="left:932px;top:714px;width:331px;height:1px;background:#cfcfc6"></div>
<svg class="a" style="left:936px;top:719px" width="11" height="10" viewBox="0 0 11 10"><path d="M5.5 9.4 L10.4 4.8 L7.6 4.8 L7.6 0.6 L3.4 0.6 L3.4 4.8 L0.6 4.8 Z" fill="#f06a30" stroke="#902a10" stroke-width="0.9" stroke-linejoin="round"/></svg>
<div class="t" style="left:952px;top:719px;color:#000">GBPJPY</div>
<div class="t" style="right:238px;top:719px;color:#cc1616">151.077</div>
<div class="t" style="right:187px;top:719px;color:#cc1616">151.160</div>
<div class="t" style="right:136px;top:719px;color:#cc1616">152.741</div>
<div class="t" style="right:85px;top:719px;color:#cc1616">150.482</div>
<div class="t" style="right:34px;top:719px;color:#cc1616">20:49</div>
<div class="a" style="left:1263px;top:550px;width:19px;height:184px;background:#f0f0f0;border-left:1px solid #e0e0e0"></div>
<svg class="a" style="left:1268px;top:555px" width="9" height="5" viewBox="0 0 9 5"><path d="M0.5 4.5 L4.5 0.5 L8.5 4.5 Z" fill="#404040"/></svg>
<div class="a" style="left:1264px;top:569px;width:16px;height:17px;border:1px solid #a0a0a0;border-radius:2px;background:linear-gradient(90deg,#f4f4f4,#dcdcdc)"></div>
<div class="a" style="left:1268px;top:574px;width:8px;height:1px;background:#666"></div>
<div class="a" style="left:1268px;top:577px;width:8px;height:1px;background:#666"></div>
<div class="a" style="left:1268px;top:580px;width:8px;height:1px;background:#666"></div>
<svg class="a" style="left:1268px;top:722px" width="9" height="5" viewBox="0 0 9 5"><path d="M0.5 0.5 L4.5 4.5 L8.5 0.5 Z" fill="#404040"/></svg>
<div class="a" style="left:932px;top:733px;width:349px;height:1px;background:#000"></div>
<div class="a" style="left:934px;top:733px;width:60px;height:19px;background:#fff;border:1px solid #000;border-top:none"></div>
<div class="t" style="left:943px;top:737px;color:#000">Symboly</div>
<div class="t" style="left:1003px;top:737px;color:#6d6d6d">Graf ticků</div>
<div class="a" style="left:1060px;top:738px;width:1px;height:10px;background:#777"></div>
<div class="a" style="left:1280px;top:550px;width:1px;height:206px;background:#b0b0b0"></div>
<div class="a" style="left:8px;top:756px;width:1277px;height:1px;background:#a0a0a0"></div>
<div class="a" style="left:8px;top:757px;width:1277px;height:21px;background:#f0f0f0"></div>
<div class="t" style="left:10px;top:764px;font-size:11.3px">Pro pomoc, stiskněte F1</div>
<div class="a" style="left:558px;top:760px;width:1px;height:17px;background:#b0b0b0"></div>
<div class="a" style="left:675px;top:760px;width:1px;height:17px;background:#b0b0b0"></div>
<div class="a" style="left:776px;top:760px;width:1px;height:17px;background:#b0b0b0"></div>
<div class="a" style="left:846px;top:760px;width:1px;height:17px;background:#b0b0b0"></div>
<div class="a" style="left:919px;top:760px;width:1px;height:17px;background:#b0b0b0"></div>
<div class="a" style="left:986px;top:760px;width:1px;height:17px;background:#b0b0b0"></div>
<div class="a" style="left:1056px;top:760px;width:1px;height:17px;background:#b0b0b0"></div>
<div class="a" style="left:1122px;top:760px;width:1px;height:17px;background:#b0b0b0"></div>
<div class="t" style="left:564px;top:764px;font-size:11px">Default</div>
<div class="t" style="left:680px;top:764px;font-size:11px">2009.09.10 19:45</div>
<div class="t" style="left:783px;top:764px;font-size:11px">O: 91.680</div>
<div class="t" style="left:853px;top:764px;font-size:11px">H: 91.699</div>
<div class="t" style="left:924px;top:764px;font-size:11px">L: 91.677</div>
<div class="t" style="left:992px;top:764px;font-size:11px">C: 91.685</div>
<div class="t" style="left:1062px;top:764px;font-size:11px">V: 272</div>
<div class="t" style="left:1191px;top:764px;font-size:11px">15/0 kb</div>
<div class="a" style="left:1128px;top:763px;width:2px;height:6px;background:#7a9a10"></div>
<div class="a" style="left:1128px;top:769px;width:2px;height:6px;background:#0a3060"></div>
<div class="a" style="left:1131px;top:763px;width:2px;height:6px;background:#7a9a10"></div>
<div class="a" style="left:1131px;top:769px;width:2px;height:6px;background:#0a3060"></div>
<div class="a" style="left:1134px;top:763px;width:2px;height:6px;background:#7a9a10"></div>
<div class="a" style="left:1134px;top:769px;width:2px;height:6px;background:#0a3060"></div>
<div class="a" style="left:1137px;top:763px;width:2px;height:6px;background:#7a9a10"></div>
<div class="a" style="left:1137px;top:769px;width:2px;height:6px;background:#0a3060"></div>
<div class="a" style="left:1140px;top:763px;width:2px;height:6px;background:#7a9a10"></div>
<div class="a" style="left:1140px;top:769px;width:2px;height:6px;background:#0a3060"></div>
<div class="a" style="left:1143px;top:763px;width:2px;height:6px;background:#7a9a10"></div>
<div class="a" style="left:1143px;top:769px;width:2px;height:6px;background:#0a3060"></div>
<div class="a" style="left:1146px;top:763px;width:2px;height:6px;background:#7a9a10"></div>
<div class="a" style="left:1146px;top:769px;width:2px;height:6px;background:#0a3060"></div>
<div class="a" style="left:1149px;top:763px;width:2px;height:6px;background:#7a9a10"></div>
<div class="a" style="left:1149px;top:769px;width:2px;height:6px;background:#0a3060"></div>
<div class="a" style="left:1130px;top:773px;width:20px;height:2px;background:#0a3060"></div>
<svg class="a" style="left:1266px;top:761px" width="18" height="17" viewBox="0 0 18 17"><path d="M17 3 L3 17 M17 7 L7 17 M17 11 L11 17 M17 15 L15 17" stroke="#a8a8a8" stroke-width="1.2"/></svg>
<div class="a" style="left:8px;top:778px;width:1280px;height:8px;background:linear-gradient(#262626 0,#262626 1px,#5a5a5a 2px,#4e4e4e 8px)"></div>
<div class="a" style="left:171px;top:780px;width:96px;height:7px;border:1px solid #a0a0a0;border-bottom:none;border-radius:3px 3px 0 0;background:linear-gradient(#8c8c8c,#707070)"></div>
<div class="a" style="left:272px;top:780px;width:96px;height:7px;border:1px solid #a0a0a0;border-bottom:none;border-radius:3px 3px 0 0;background:linear-gradient(#8c8c8c,#707070)"></div>
<div class="a" style="left:373px;top:780px;width:96px;height:7px;border:1px solid #a0a0a0;border-bottom:none;border-radius:3px 3px 0 0;background:linear-gradient(#8c8c8c,#707070)"></div>
<div class="a" style="left:474px;top:780px;width:96px;height:7px;border:1px solid #a0a0a0;border-bottom:none;border-radius:3px 3px 0 0;background:linear-gradient(#8c8c8c,#707070)"></div>
<div class="a" style="left:574px;top:780px;width:96px;height:7px;border:1px solid #a0a0a0;border-bottom:none;border-radius:3px 3px 0 0;background:linear-gradient(#8c8c8c,#707070)"></div>
<div class="a" style="left:675px;top:780px;width:96px;height:7px;border:1px solid #a0a0a0;border-bottom:none;border-radius:3px 3px 0 0;background:linear-gradient(#8c8c8c,#707070)"></div>
<div class="a" style="left:777px;top:780px;width:97px;height:7px;border:1px solid #111;border-bottom:none;border-radius:3px 3px 0 0;background:#2c2c2c"></div>
<div class="a" style="left:913px;top:780px;width:170px;height:7px;border:1px solid #a0a0a0;border-bottom:none;border-radius:3px 3px 0 0;background:linear-gradient(#8c8c8c,#707070)"></div>
<div class="a" style="left:940px;top:782px;width:124px;height:5px;border:1px solid #bbb;border-bottom:none;background:#d8d8d8"></div>
<div class="a" style="left:17px;top:779px;width:42px;height:42px;border-radius:50%;border:3px solid #101820;background:radial-gradient(circle at 50% 25%,#c8e0f4,#4a7aa8)"></div>
<div class="a" style="left:28px;top:784px;width:9px;height:3px;background:#e8601a"></div>
<div class="a" style="left:39px;top:784px;width:9px;height:3px;background:#6ab82a"></div>
<div class="a" style="left:260px;top:783px;width:10px;height:3px;background:#e8b040"></div>
<div class="a" style="left:310px;top:783px;width:10px;height:3px;background:#d8d8d8"></div>
<div class="a" style="left:383px;top:783px;width:10px;height:3px;background:#e8b040"></div>
<div class="a" style="left:494px;top:783px;width:10px;height:3px;background:#60a0d0"></div>
<div class="a" style="left:592px;top:783px;width:10px;height:3px;background:#e0c040"></div>
<div class="a" style="left:693px;top:783px;width:10px;height:3px;background:#4a6ab0"></div>
<div class="a" style="left:1100px;top:783px;width:10px;height:3px;background:#e8a040"></div>
<div class="a" style="left:1130px;top:783px;width:10px;height:3px;background:#c8c8c8"></div>
<div class="a" style="left:1148px;top:783px;width:10px;height:3px;background:#60c040"></div>
<div class="a" style="left:1166px;top:783px;width:10px;height:3px;background:#3a4aa0"></div>
<div class="a" style="left:1192px;top:783px;width:10px;height:3px;background:#d0a030"></div>
<div class="a" style="left:1212px;top:783px;width:10px;height:3px;background:#4a6aa0"></div>
</body></html>
